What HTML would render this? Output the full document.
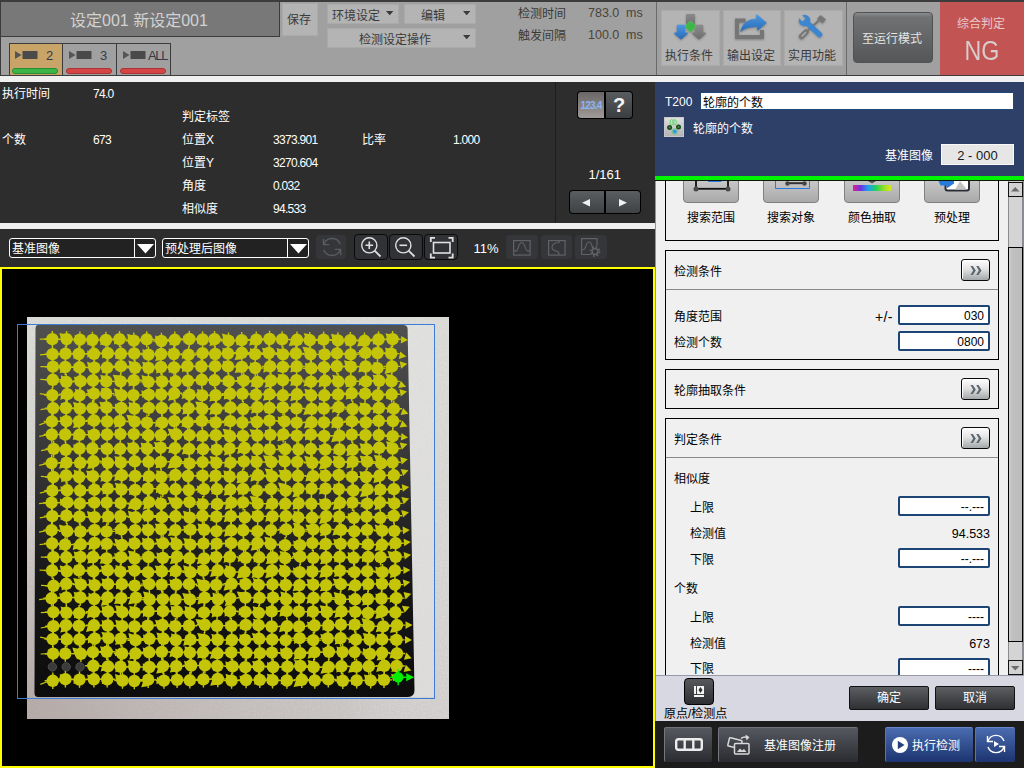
<!DOCTYPE html>
<html lang="zh-CN">
<head>
<meta charset="utf-8">
<title>轮廓的个数</title>
<style>
*{box-sizing:border-box;margin:0;padding:0}
html,body{width:1024px;height:768px;overflow:hidden;background:#2d2d2d}
body{font-family:"Liberation Sans","Noto Sans CJK SC",sans-serif;font-size:12px;color:#fff;position:relative}
.a{position:absolute}
.t{position:absolute;white-space:nowrap;line-height:14px;height:14px;font-size:12px}
.c{text-align:center}
.r{text-align:right}
svg{position:absolute;overflow:visible}
/* top bar */
#top{left:0;top:0;width:1024px;height:76px;background:#a0a0a0;border-top:2px solid #3c3c3c;border-bottom:1px solid #3c3c3c;border-left:1px solid #3c3c3c}
#title{left:1px;top:2px;width:279px;height:35px;background:#787878;border-right:1px solid #3c3c3c;border-bottom:1px solid #3c3c3c}
.lb{background:#b4b4b4;border:1px solid #aaa;color:#3a3a3a}
.dk{color:#3a3a3a}
.tab{top:43px;width:54px;height:32px;border:1px solid #3c3c3c;border-bottom:none;background:#a0a0a0}
.pill{left:2px;top:24px;width:46px;height:5.5px;border-radius:3px;border:1px solid #a83434;background:#d64545}
.num{color:#383848;font-size:13px}
.vsep{top:2px;width:1px;height:73px;background:#6a6a6a}
/* dark panel */
.w{color:#fff}
.n{letter-spacing:-.7px}
.strip{background:#f0f0f0}
.gbtn{background:linear-gradient(#5a5e60,#3c4042);border:1px solid #000}
.dbtn{background:#34363a;border-radius:3px}
.zbtn{background:#303236;border:1px solid #0a0a0a;border-radius:4px;top:234px;height:26px;width:34px}
.sel{top:238px;height:20px;width:147px;border:1px solid #fff;border-radius:3px;background:#222}
/* right panel */
.k{color:#000}
.box{left:665px;width:334px;border:1px solid #000;background:#f0f0f0}
.inp{left:898px;width:92px;height:20px;border:2px solid #1c4474;border-radius:2px;background:#fff;color:#000;text-align:right;padding-right:4px;line-height:18px;font-size:12px}
.more{left:961px;width:29px;height:22px;border:1px solid #0a0a0a;border-radius:3px;background:linear-gradient(#fdfdfd 0,#e4e4e4 45%,#a4a8a8 100%);box-shadow:inset 1px 1px 0 #fff}
.ibtn{top:150px;width:56px;height:53px;border:1px solid #808080;border-radius:4px;background:linear-gradient(#f4f4f4 0,#c8c8c8 58%,#a8a8a8 100%)}
.fbtn{top:686px;height:24px;width:80px;border:1px solid #111;border-radius:2px;background:linear-gradient(#5c5e62,#2e3034);color:#fff;text-align:center;line-height:23px;font-size:12px}
.bbtn{top:727px;height:35px;border-radius:2px;background:linear-gradient(#55585f,#2a2c31);border-top:1px solid #70737a;border-left:1px solid #74777e}
</style>
</head>
<body>
<!-- ===== TOP BAR ===== -->
<div id="top" class="a"></div>
<div id="title" class="a"></div>
<div class="t" style="left:70px;top:11px;font-size:16px;line-height:20px;height:20px;color:#d2d2d2">设定001 新设定001</div>

<!-- camera tabs -->
<div class="a tab" style="left:9px;width:54px;background:#c8a468">
  <svg width="24" height="10" style="left:5px;top:7px"><path d="M0 0L6.5 4L0 8Z" fill="#555"/><rect x="7.5" y="0" width="15" height="8" fill="#4a4a4a"/></svg>
  <div class="t num" style="left:36px;top:5px">2</div>
  <div class="a pill" style="background:#3cb548;border-color:#2a8c34"></div>
</div>
<div class="a tab" style="left:62px;width:55px">
  <svg width="24" height="10" style="left:6px;top:7px"><path d="M0 0L6.5 4L0 8Z" fill="#555"/><rect x="7.5" y="0" width="15" height="8" fill="#4a4a4a"/></svg>
  <div class="t num" style="left:37px;top:5px">3</div>
  <div class="a pill" style="left:3px"></div>
</div>
<div class="a tab" style="left:116px;width:55px">
  <svg width="24" height="10" style="left:6px;top:7px"><path d="M0 0L6.5 4L0 8Z" fill="#555"/><rect x="7.5" y="0" width="15" height="8" fill="#4a4a4a"/></svg>
  <div class="t num" style="left:31px;top:5px;letter-spacing:-1.3px">ALL</div>
  <div class="a pill" style="left:3px"></div>
</div>

<!-- save + dropdown buttons -->
<div class="a lb" style="left:282px;top:3px;width:36px;height:33px"></div>
<div class="t dk" style="left:287px;top:13px">保存</div>
<div class="a lb" style="left:327px;top:4px;width:72px;height:20px"></div>
<div class="t dk" style="left:332px;top:9px">环境设定</div>
<svg width="8" height="5" style="left:386px;top:11px"><path d="M0 0H7.4L3.7 4.2Z" fill="#3a3a3a"/></svg>
<div class="a lb" style="left:404px;top:4px;width:72px;height:20px"></div>
<div class="t dk" style="left:421px;top:9px">编辑</div>
<svg width="8" height="5" style="left:463px;top:11px"><path d="M0 0H7.4L3.7 4.2Z" fill="#3a3a3a"/></svg>
<div class="a lb" style="left:327px;top:28px;width:149px;height:20px"></div>
<div class="t dk" style="left:359px;top:33px">检测设定操作</div>
<svg width="8" height="5" style="left:463px;top:35px"><path d="M0 0H7.4L3.7 4.2Z" fill="#3a3a3a"/></svg>

<!-- timing -->
<div class="t dk" style="left:518px;top:7px">检测时间</div>
<div class="t" style="left:588px;top:6px;color:#4a4438;font-size:12.5px">783.0</div>
<div class="t" style="left:626px;top:6px;color:#4a4438;font-size:12.5px">ms</div>
<div class="t dk" style="left:518px;top:29px">触发间隔</div>
<div class="t" style="left:588px;top:28px;color:#4a4438;font-size:12.5px">100.0</div>
<div class="t" style="left:626px;top:28px;color:#4a4438;font-size:12.5px">ms</div>

<div class="a vsep" style="left:656px"></div>
<!-- icon buttons -->
<div class="a lb" style="left:661px;top:10px;width:59px;height:56px"></div>
<div class="a lb" style="left:723px;top:10px;width:58px;height:56px"></div>
<div class="a lb" style="left:784px;top:10px;width:59px;height:56px"></div>
<div class="t dk" style="left:665px;top:49px">执行条件</div>
<div class="t dk" style="left:727px;top:49px">输出设定</div>
<div class="t dk" style="left:788px;top:49px">实用功能</div>
<!-- icon: exec condition -->
<svg width="34" height="27" style="left:673px;top:13px;filter:drop-shadow(0 1px 1px rgba(0,0,0,.28))" viewBox="0 0 34 27">
  <defs>
    <linearGradient id="gb" x1="0" y1="0" x2="0" y2="1"><stop offset="0" stop-color="#4a96e0"/><stop offset="1" stop-color="#2a6cb8"/></linearGradient>
    <linearGradient id="gg" x1="0" y1="0" x2="0" y2="1"><stop offset="0" stop-color="#8a8a8a"/><stop offset="1" stop-color="#6e6e6e"/></linearGradient>
  </defs>
  <rect x="13" y="1" width="9" height="12" rx="1" fill="url(#gg)"/>
  <path d="M4.500 12.500H11.500V20.200H14.300L8 25.800L1.700 20.200H4.500Z" fill="url(#gb)" stroke="url(#gb)" stroke-width="1.400" stroke-linejoin="round"/>
  <path d="M22.500 12.500H29.500V20.200H32.300L26 25.800L19.700 20.200H22.500Z" fill="url(#gg)" stroke="url(#gg)" stroke-width="1.400" stroke-linejoin="round"/>
  <rect x="13.400" y="9.400" width="8.200" height="8.200" rx="1.600" transform="rotate(45 17.500 13.500)" fill="#3eb648" stroke="#5acc60" stroke-width=".6"/>
</svg>
<!-- icon: output -->
<svg width="34" height="27" style="left:734px;top:13px;filter:drop-shadow(0 1px 1px rgba(0,0,0,.28))" viewBox="0 0 34 27">
  <path d="M1 5.500H11.500V9.500H5V22H26V17H30V26H1Z" fill="#767676"/>
  <path d="M6.800 18.300C8.500 10.500 14 6.200 22.700 6.200V1.800L32.300 9.800L23.700 17.200V13.600C16 13.600 10.500 15 6.800 18.300Z" fill="url(#gb)" stroke="url(#gb)" stroke-width="1" stroke-linejoin="round"/>
</svg>
<!-- icon: tools -->
<svg width="30" height="26" style="left:797px;top:14px;filter:drop-shadow(0 1px 1px rgba(0,0,0,.22))" viewBox="0 0 30 26">
  <defs><mask id="wm" maskUnits="userSpaceOnUse" x="-2" y="-2" width="34" height="30"><rect x="-2" y="-2" width="34" height="30" fill="#fff"/><path d="M7 6L-1 -2" stroke="#000" stroke-width="4.400"/></mask></defs>
  <path d="M24 4.500L7 20" stroke="#777" stroke-width="2.200" stroke-linecap="round"/>
  <path d="M23.500 1.500L28.500 5.500L25.500 9L20.500 5Z" fill="#777" stroke="#777" stroke-width="1" stroke-linejoin="round"/>
  <path d="M9 18L4.500 22.500" stroke="#777" stroke-width="5.500" stroke-linecap="round"/>
  <path d="M8.500 18.500L5 22" stroke="#b0b0b0" stroke-width="1.400" stroke-linecap="round"/>
  <g mask="url(#wm)"><path d="M9 8L22.500 20.500" stroke="#3c86d0" stroke-width="5.600" stroke-linecap="round"/>
  <circle cx="7.500" cy="6.500" r="5.800" fill="#3c86d0"/></g>
</svg>
<div class="a vsep" style="left:846px"></div>
<!-- run mode button -->
<div class="a" style="left:853px;top:12px;width:80px;height:51px;border-radius:4px;border:1px solid #505254;background:linear-gradient(#8a8c8e 0,#707274 4px,#545658 100%)"></div>
<div class="t" style="left:862px;top:32px;color:#e4e4e4">至运行模式</div>
<!-- NG -->
<div class="a" style="left:940px;top:2px;width:84px;height:73px;background:#c25454"></div>
<div class="t" style="left:957px;top:17px;color:#ecc8c8">综合判定</div>
<div class="t c" style="left:940px;width:84px;top:35px;font-size:27px;line-height:32px;height:32px;color:#d8cccc;transform:scaleX(.86)">NG</div>

<!-- light strip below top bar -->
<div class="a strip" style="left:0;top:76px;width:1024px;height:6px"></div>
<!-- ===== DARK INFO PANEL ===== -->
<div class="a" style="left:0;top:82px;width:655px;height:141px;background:#2d2d2d"></div>
<div class="t w" style="left:2px;top:87px">执行时间</div>
<div class="t w n" style="left:93px;top:87px">74.0</div>
<div class="t w" style="left:182px;top:110px">判定标签</div>
<div class="t w" style="left:2px;top:133px">个数</div>
<div class="t w n" style="left:93px;top:133px">673</div>
<div class="t w" style="left:182px;top:133px">位置X</div>
<div class="t w n" style="left:273px;top:133px">3373.901</div>
<div class="t w" style="left:362px;top:133px">比率</div>
<div class="t w n" style="left:453px;top:133px">1.000</div>
<div class="t w" style="left:182px;top:156px">位置Y</div>
<div class="t w n" style="left:273px;top:156px">3270.604</div>
<div class="t w" style="left:182px;top:179px">角度</div>
<div class="t w n" style="left:273px;top:179px">0.032</div>
<div class="t w" style="left:182px;top:202px">相似度</div>
<div class="t w n" style="left:273px;top:202px">94.533</div>
<div class="a" style="left:555px;top:82px;width:1px;height:141px;background:#0000ff"></div>
<!-- 123.4 / ? -->
<div class="a" style="left:577px;top:91px;width:56px;height:28px;background:#000;border-radius:4px"></div>
<div class="a" style="left:578px;top:92px;width:26px;height:26px;border-radius:3px 0 0 3px;background:linear-gradient(#6a6666,#a09a98)"></div>
<div class="a" style="left:606px;top:92px;width:26px;height:26px;border-radius:0 3px 3px 0;background:linear-gradient(#585c5e,#3a3e40)"></div>
<div class="t" style="left:578px;top:99px;width:26px;font-size:10px;font-weight:bold;letter-spacing:-.8px;color:#8ab4f4;text-align:center">123.4</div>
<div class="t c" style="left:606px;top:93.5px;width:26px;font-size:20px;font-weight:bold;line-height:22px;height:22px;color:#f4f4f4">?</div>
<!-- 1/161 -->
<div class="t w" style="left:588.5px;top:168px;font-size:13px">1/161</div>
<div class="a" style="left:569px;top:190px;width:72px;height:24px;background:#000;border-radius:4px"></div>
<div class="a" style="left:570px;top:191px;width:34px;height:22px;border-radius:3px 0 0 3px;background:linear-gradient(#5a5e60,#3e4244)"></div>
<div class="a" style="left:606px;top:191px;width:34px;height:22px;border-radius:0 3px 3px 0;background:linear-gradient(#5a5e60,#3e4244)"></div>
<svg width="8" height="8" style="left:582px;top:199px"><path d="M8 0V7.500L0 3.750Z" fill="#f0f0f0"/></svg>
<svg width="8" height="8" style="left:619px;top:199px"><path d="M0 0V7.500L8 3.750Z" fill="#f0f0f0"/></svg>
<!-- strip -->
<div class="a strip" style="left:0;top:223px;width:655px;height:6px"></div>
<!-- ===== TOOLBAR ===== -->
<div class="a" style="left:0;top:229px;width:655px;height:38px;background:#2d2d2d"></div>
<div class="a sel" style="left:9px"><div class="a" style="left:124px;top:0;width:1px;height:18px;background:#fff"></div>
  <svg width="18" height="10" style="left:127px;top:5px"><path d="M0 0H17L8.500 9.500Z" fill="#fff"/></svg></div>
<div class="t w" style="left:12px;top:242px">基准图像</div>
<div class="a sel" style="left:162px"><div class="a" style="left:124px;top:0;width:1px;height:18px;background:#fff"></div>
  <svg width="18" height="10" style="left:127px;top:5px"><path d="M0 0H17L8.500 9.500Z" fill="#fff"/></svg></div>
<div class="t w" style="left:165px;top:242px">预处理后图像</div>
<!-- refresh (disabled) -->
<div class="a dbtn" style="left:316px;top:235px;width:30px;height:24px"></div>
<svg width="22" height="22" style="left:321px;top:236px" viewBox="0 0 20 20" fill="none" stroke="#5a5c60" stroke-width="1.200">
  <path d="M2.500 7.500A8 8 0 0 1 17.500 7.500"/><path d="M2.200 2.500V7.800H7.500"/>
  <path d="M17.500 12.500A8 8 0 0 1 2.500 12.500"/><path d="M17.800 17.500V12.200H12.500"/>
</svg>
<!-- zoom buttons -->
<div class="a zbtn" style="left:354px"></div>
<div class="a zbtn" style="left:389px"></div>
<div class="a zbtn" style="left:424px"></div>
<svg width="24" height="24" style="left:358px;top:234px" viewBox="0 0 24 24" fill="none" stroke="#e0e0e0" stroke-width="1.400">
  <circle cx="11.300" cy="11.300" r="7.600"/><path d="M16.800 16.800L22.500 22.500" stroke-width="1.800"/><path d="M7.500 11.300H15.100M11.300 7.500V15.100" stroke-width="1.600"/>
</svg>
<svg width="24" height="24" style="left:392px;top:234px" viewBox="0 0 24 24" fill="none" stroke="#e0e0e0" stroke-width="1.400">
  <circle cx="11.300" cy="11.300" r="7.600"/><path d="M16.800 16.800L22.500 22.500" stroke-width="1.800"/><path d="M7.500 11.300H15.100" stroke-width="1.600"/>
</svg>
<svg width="24" height="22" style="left:430px;top:237px" viewBox="0 0 24 22" fill="none" stroke="#e0e0e0" stroke-width="1.600">
  <rect x="3.500" y="5.500" width="16.500" height="10.500"/>
  <path d="M0.800 5V0.800H5M18.500 0.800H22.700V5M22.700 16.500V20.700H18.500M5 20.700H0.800V16.500" stroke-width="1.800"/>
</svg>
<div class="t w" style="left:473.500px;top:242px;font-size:13px">11%</div>
<!-- disabled buttons -->
<div class="a dbtn" style="left:506px;top:235px;width:32px;height:24px"></div>
<div class="a dbtn" style="left:541px;top:235px;width:31px;height:24px"></div>
<div class="a dbtn" style="left:575px;top:235px;width:32px;height:24px"></div>
<svg width="18" height="16" style="left:513px;top:240px" viewBox="0 0 18 16" fill="none" stroke="#606266" stroke-width="1.200">
  <rect x=".6" y=".6" width="16.500" height="14.500"/><path d="M.6 10.800H3.500C5 10.800 5.500 2.500 8.800 2.500C12 2.500 12.500 10.800 14.200 10.800H17"/>
</svg>
<svg width="18" height="16" style="left:548px;top:240px" viewBox="0 0 18 16" fill="none" stroke="#606266" stroke-width="1.200">
  <rect x=".6" y=".6" width="16.500" height="14.500"/><path d="M11 .6V2.500C5.500 2.500 4 5 4 7.500C4 10.500 7 11 9.500 11.500C11 12 11 13 11 15"/>
</svg>
<svg width="24" height="20" style="left:581px;top:238px" viewBox="0 0 24 20" fill="none" stroke="#606266" stroke-width="1.200">
  <path d="M9 16.500H.6V.6H16V8"/><path d="M.6 11.500H3C4.500 11.500 5 4 8 4C10.500 4 11 8 11.500 9.500"/>
  <circle cx="14" cy="13.500" r="2.900" stroke-width="1.500"/>
  <circle cx="14" cy="13.500" r="4.500" stroke-width="1.800" stroke-dasharray="1.700 1.830"/>
</svg>
<!-- ===== IMAGE VIEW ===== -->
<div class="a" style="left:0;top:267px;width:655px;height:501px;background:#000;border:2px solid #ffff00"></div>
<svg width="655" height="501" style="left:0;top:267px" viewBox="0 267 655 501">
<defs><linearGradient id="pg" x1="0" y1="0" x2="0" y2="1"><stop offset="0" stop-color="#d8d8d4"/><stop offset=".7" stop-color="#d4d2d0"/><stop offset="1" stop-color="#cfcccb"/></linearGradient><linearGradient id="tg" x1="0" y1="0" x2="0" y2="1"><stop offset="0" stop-color="#505050"/><stop offset=".35" stop-color="#383838"/><stop offset=".7" stop-color="#161616"/><stop offset="1" stop-color="#0c0c0c"/></linearGradient><filter id="nz" x="0" y="0" width="100%" height="100%"><feTurbulence type="fractalNoise" baseFrequency=".55" numOctaves="2" seed="3" result="n"/><feColorMatrix in="n" type="matrix" values="0 0 0 0 1  0 0 0 0 1  0 0 0 0 1  .9 .9 0 0 -.75"/><feComposite operator="in" in2="SourceGraphic"/></filter></defs>
<rect x="27" y="317" width="422" height="402" fill="url(#pg)"/>
<rect x="27" y="317" width="422" height="402" fill="#fff" opacity=".35" filter="url(#nz)"/>
<defs><linearGradient id="bl" x1="0" y1="0" x2="1" y2="0"><stop offset="0" stop-color="#9c8c88" stop-opacity=".55"/><stop offset=".75" stop-color="#b0a8a4" stop-opacity=".25"/><stop offset="1" stop-color="#d8d8d8" stop-opacity="0"/></linearGradient><linearGradient id="bv" x1="0" y1="0" x2="0" y2="1"><stop offset="0" stop-color="#9c8c88" stop-opacity="0"/><stop offset=".5" stop-color="#9c8c88" stop-opacity=".12"/><stop offset="1" stop-color="#9c8c88" stop-opacity=".55"/></linearGradient></defs><rect x="27" y="697" width="422" height="22" fill="url(#bl)"/><rect x="27" y="317" width="9" height="380" fill="url(#bv)"/>
<rect x="408" y="325" width="27" height="372" fill="#e4e4e4" opacity=".55"/>
<path d="M38 325H403Q407.500 325 407.600 329L414.500 690Q414.500 697 408 697H38Q34.500 697 34.500 693L35.500 329Q35.500 325 38 325Z" fill="url(#tg)"/>
<circle cx="52.4" cy="666.9" r="4.200" fill="#3a3a3a" stroke="#555" stroke-width=".8"/>
<circle cx="66.2" cy="666.9" r="4.200" fill="#3a3a3a" stroke="#555" stroke-width=".8"/>
<circle cx="80.0" cy="666.9" r="4.200" fill="#3a3a3a" stroke="#555" stroke-width=".8"/>
<path d="M67.1 334.5L61.6 340.3L59.3 333.0ZM51.6 331.0h1.400v16.400h-1.400zM44.1 338.5h16.400v1.400h-16.400zM82.1 338.1L75.3 342.3L74.8 334.7ZM65.9 330.9h1.400v16.400h-1.400zM58.4 338.4h16.400v1.400h-16.400zM95.0 343.0L87.4 345.2L89.0 337.8ZM79.2 331.5h1.400v16.400h-1.400zM71.7 339.0h16.400v1.400h-16.400zM107.7 342.5L100.2 345.2L101.4 337.7ZM91.7 331.8h1.400v16.400h-1.400zM84.2 339.3h16.400v1.400h-16.400zM121.3 341.4L114.0 344.5L114.7 336.9ZM105.2 331.7h1.400v16.400h-1.400zM97.7 339.2h16.400v1.400h-16.400zM134.7 336.1L128.6 341.2L127.1 333.7ZM118.8 330.9h1.400v16.400h-1.400zM111.3 338.4h16.400v1.400h-16.400zM149.3 339.8L142.6 344.0L142.1 336.4ZM133.1 332.5h1.400v16.400h-1.400zM125.6 340.0h16.400v1.400h-16.400zM162.2 338.9L155.4 342.9L155.1 335.3ZM146.0 331.2h1.400v16.400h-1.400zM138.5 338.7h16.400v1.400h-16.400zM176.8 342.4L169.5 345.6L170.2 338.0ZM160.7 332.8h1.400v16.400h-1.400zM153.2 340.3h16.400v1.400h-16.400zM190.3 338.7L183.6 343.0L183.1 335.4ZM174.1 331.6h1.400v16.400h-1.400zM166.6 339.1h16.400v1.400h-16.400zM204.6 341.1L197.2 343.9L198.2 336.4ZM188.6 330.8h1.400v16.400h-1.400zM181.1 338.3h16.400v1.400h-16.400zM217.2 344.6L209.4 345.9L211.8 338.7ZM201.9 331.3h1.400v16.400h-1.400zM194.4 338.8h16.400v1.400h-16.400zM229.6 335.4L223.7 340.8L221.9 333.4ZM213.8 331.0h1.400v16.400h-1.400zM206.3 338.5h16.400v1.400h-16.400zM243.8 342.5L236.4 345.5L237.3 337.9ZM227.8 332.5h1.400v16.400h-1.400zM220.3 340.0h16.400v1.400h-16.400zM256.9 343.5L249.2 345.7L250.8 338.3ZM241.0 332.0h1.400v16.400h-1.400zM233.5 339.5h16.400v1.400h-16.400zM271.7 338.4L265.1 342.8L264.4 335.2ZM255.6 331.5h1.400v16.400h-1.400zM248.1 339.0h16.400v1.400h-16.400zM285.1 338.9L278.2 342.8L278.1 335.2ZM268.9 330.8h1.400v16.400h-1.400zM261.4 338.3h16.400v1.400h-16.400zM296.6 344.9L288.7 345.9L291.4 338.8ZM281.4 331.2h1.400v16.400h-1.400zM273.9 338.7h16.400v1.400h-16.400zM311.6 334.5L306.3 340.5L303.7 333.3ZM296.3 331.6h1.400v16.400h-1.400zM288.8 339.1h16.400v1.400h-16.400zM325.3 340.7L318.1 344.3L318.4 336.7ZM309.1 332.0h1.400v16.400h-1.400zM301.6 339.5h16.400v1.400h-16.400zM338.6 335.6L332.8 341.0L330.9 333.7ZM322.9 331.4h1.400v16.400h-1.400zM315.4 338.9h16.400v1.400h-16.400zM353.1 343.8L345.4 346.0L347.1 338.6ZM337.2 332.2h1.400v16.400h-1.400zM329.7 339.7h16.400v1.400h-16.400zM364.9 345.3L357.0 346.6L359.6 339.4ZM349.6 332.0h1.400v16.400h-1.400zM342.1 339.5h16.400v1.400h-16.400zM379.9 341.1L372.9 344.8L373.0 337.2ZM363.8 332.6h1.400v16.400h-1.400zM356.3 340.1h16.400v1.400h-16.400zM393.2 334.9L387.7 340.6L385.4 333.3ZM377.8 331.3h1.400v16.400h-1.400zM370.3 338.8h16.400v1.400h-16.400zM408.0 340.0L400.8 343.4L401.3 335.9ZM391.9 331.0h1.400v16.400h-1.400zM384.4 338.5h16.400v1.400h-16.400zM68.0 354.7L60.9 358.2L61.1 350.6ZM51.8 346.0h1.400v16.400h-1.400zM44.3 353.5h16.400v1.400h-16.400zM80.8 356.2L73.2 358.7L74.5 351.2ZM64.8 345.4h1.400v16.400h-1.400zM57.3 352.9h16.400v1.400h-16.400zM94.3 354.1L87.3 357.8L87.3 350.2ZM78.1 345.8h1.400v16.400h-1.400zM70.6 353.3h16.400v1.400h-16.400zM109.4 355.4L102.0 358.4L102.8 350.9ZM93.3 345.6h1.400v16.400h-1.400zM85.8 353.1h16.400v1.400h-16.400zM122.8 357.1L115.0 359.0L116.9 351.6ZM107.1 345.0h1.400v16.400h-1.400zM99.6 352.5h16.400v1.400h-16.400zM136.4 354.1L129.4 357.7L129.5 350.1ZM120.2 345.6h1.400v16.400h-1.400zM112.7 353.1h16.400v1.400h-16.400zM149.7 352.4L143.0 356.7L142.5 349.1ZM133.5 345.3h1.400v16.400h-1.400zM126.0 352.8h16.400v1.400h-16.400zM163.0 359.8L155.1 361.0L157.7 353.9ZM147.7 346.4h1.400v16.400h-1.400zM140.2 353.9h16.400v1.400h-16.400zM176.2 350.5L170.3 355.8L168.6 348.4ZM160.4 345.8h1.400v16.400h-1.400zM152.9 353.3h16.400v1.400h-16.400zM189.1 356.2L181.7 359.0L182.7 351.5ZM173.1 345.8h1.400v16.400h-1.400zM165.6 353.3h16.400v1.400h-16.400zM204.1 353.4L197.4 357.8L196.8 350.2ZM187.9 346.5h1.400v16.400h-1.400zM180.4 354.0h16.400v1.400h-16.400zM217.8 356.2L210.1 358.6L211.7 351.1ZM201.9 344.9h1.400v16.400h-1.400zM194.4 352.4h16.400v1.400h-16.400zM230.0 349.5L224.4 355.2L222.2 347.9ZM214.5 345.8h1.400v16.400h-1.400zM207.0 353.3h16.400v1.400h-16.400zM242.4 359.2L234.5 360.1L237.2 353.1ZM227.2 345.3h1.400v16.400h-1.400zM219.7 352.8h16.400v1.400h-16.400zM257.2 351.0L250.7 355.6L249.9 348.0ZM241.1 344.6h1.400v16.400h-1.400zM233.6 352.1h16.400v1.400h-16.400zM269.8 349.0L264.4 354.9L261.9 347.8ZM254.4 346.0h1.400v16.400h-1.400zM246.9 353.5h16.400v1.400h-16.400zM284.1 350.4L277.9 355.3L276.6 347.8ZM268.2 344.8h1.400v16.400h-1.400zM260.7 352.3h16.400v1.400h-16.400zM298.5 353.2L291.8 357.6L291.2 350.0ZM282.3 346.2h1.400v16.400h-1.400zM274.8 353.7h16.400v1.400h-16.400zM310.3 347.8L305.2 353.9L302.4 346.8ZM295.2 345.3h1.400v16.400h-1.400zM287.7 352.8h16.400v1.400h-16.400zM325.9 353.5L319.2 357.7L318.7 350.1ZM309.8 346.2h1.400v16.400h-1.400zM302.3 353.7h16.400v1.400h-16.400zM340.1 353.5L333.3 357.7L332.9 350.1ZM323.9 346.2h1.400v16.400h-1.400zM316.4 353.7h16.400v1.400h-16.400zM352.3 355.8L344.8 358.5L346.0 350.9ZM336.3 345.2h1.400v16.400h-1.400zM328.8 352.7h16.400v1.400h-16.400zM366.1 352.7L359.6 357.3L358.8 349.7ZM350.0 346.2h1.400v16.400h-1.400zM342.5 353.7h16.400v1.400h-16.400zM380.9 350.1L374.7 355.0L373.3 347.6ZM364.9 344.6h1.400v16.400h-1.400zM357.4 352.1h16.400v1.400h-16.400zM392.6 349.8L386.6 354.9L385.0 347.5ZM376.8 344.8h1.400v16.400h-1.400zM369.3 352.3h16.400v1.400h-16.400zM406.4 356.4L398.8 358.9L400.2 351.4ZM390.5 345.4h1.400v16.400h-1.400zM383.0 352.9h16.400v1.400h-16.400zM67.5 371.8L59.6 373.1L62.2 365.9ZM52.2 358.5h1.400v16.400h-1.400zM44.7 366.0h16.400v1.400h-16.400zM80.7 367.3L73.6 371.0L73.7 363.4ZM64.5 358.8h1.400v16.400h-1.400zM57.0 366.3h16.400v1.400h-16.400zM94.7 364.0L88.6 369.2L87.0 361.8ZM78.8 359.1h1.400v16.400h-1.400zM71.3 366.6h16.400v1.400h-16.400zM109.5 371.2L101.8 373.3L103.5 365.9ZM93.7 359.4h1.400v16.400h-1.400zM86.2 366.9h16.400v1.400h-16.400zM122.4 366.2L115.8 370.5L115.2 363.0ZM106.3 359.3h1.400v16.400h-1.400zM98.8 366.8h16.400v1.400h-16.400zM136.0 362.8L130.1 368.1L128.4 360.6ZM120.2 358.0h1.400v16.400h-1.400zM112.7 365.5h16.400v1.400h-16.400zM149.9 363.5L144.2 369.1L142.1 361.8ZM134.3 359.6h1.400v16.400h-1.400zM126.8 367.1h16.400v1.400h-16.400zM163.7 371.1L156.0 373.4L157.6 365.9ZM147.8 359.7h1.400v16.400h-1.400zM140.3 367.2h16.400v1.400h-16.400zM176.1 370.6L168.4 372.7L170.2 365.3ZM160.3 358.8h1.400v16.400h-1.400zM152.8 366.3h16.400v1.400h-16.400zM189.4 369.1L182.0 372.2L182.8 364.6ZM173.3 359.3h1.400v16.400h-1.400zM165.8 366.8h16.400v1.400h-16.400zM202.9 365.9L196.0 369.8L195.8 362.2ZM186.7 358.0h1.400v16.400h-1.400zM179.2 365.5h16.400v1.400h-16.400zM216.8 367.2L209.6 370.7L210.0 363.1ZM200.6 358.3h1.400v16.400h-1.400zM193.1 365.8h16.400v1.400h-16.400zM230.3 363.0L224.3 368.2L222.7 360.7ZM214.5 358.0h1.400v16.400h-1.400zM207.0 365.5h16.400v1.400h-16.400zM242.5 371.8L234.7 373.0L237.3 365.8ZM227.3 358.2h1.400v16.400h-1.400zM219.8 365.7h16.400v1.400h-16.400zM257.2 365.2L250.7 369.7L249.8 362.2ZM241.1 358.7h1.400v16.400h-1.400zM233.6 366.2h16.400v1.400h-16.400zM270.6 369.7L263.3 372.7L264.1 365.1ZM254.5 359.8h1.400v16.400h-1.400zM247.0 367.3h16.400v1.400h-16.400zM285.1 370.2L277.4 372.2L279.2 364.8ZM269.4 358.2h1.400v16.400h-1.400zM261.9 365.7h16.400v1.400h-16.400zM297.9 370.6L290.2 372.6L292.0 365.2ZM282.2 358.7h1.400v16.400h-1.400zM274.7 366.2h16.400v1.400h-16.400zM312.2 366.0L305.3 370.0L305.1 362.4ZM296.0 358.2h1.400v16.400h-1.400zM288.5 365.7h16.400v1.400h-16.400zM326.6 365.8L320.3 370.7L319.1 363.2ZM310.6 360.1h1.400v16.400h-1.400zM303.1 367.6h16.400v1.400h-16.400zM339.5 367.7L332.4 371.3L332.7 363.7ZM323.3 359.0h1.400v16.400h-1.400zM315.8 366.5h16.400v1.400h-16.400zM351.6 361.9L346.0 367.6L343.9 360.3ZM336.1 358.1h1.400v16.400h-1.400zM328.6 365.6h16.400v1.400h-16.400zM365.9 370.6L358.2 372.5L360.1 365.2ZM350.2 358.5h1.400v16.400h-1.400zM342.7 366.0h16.400v1.400h-16.400zM381.0 364.7L374.4 369.3L373.6 361.7ZM364.9 358.3h1.400v16.400h-1.400zM357.4 365.8h16.400v1.400h-16.400zM392.3 372.3L384.5 374.1L386.6 366.8ZM376.7 360.0h1.400v16.400h-1.400zM369.2 367.5h16.400v1.400h-16.400zM407.3 363.7L401.1 368.7L399.7 361.2ZM391.3 358.2h1.400v16.400h-1.400zM383.8 365.7h16.400v1.400h-16.400zM68.2 378.3L61.6 382.7L60.9 375.2ZM52.1 371.6h1.400v16.400h-1.400zM44.6 379.1h16.400v1.400h-16.400zM81.5 378.9L75.4 384.0L73.9 376.5ZM65.6 373.7h1.400v16.400h-1.400zM58.1 381.2h16.400v1.400h-16.400zM96.1 380.4L89.3 384.5L88.9 377.0ZM79.9 373.0h1.400v16.400h-1.400zM72.4 380.5h16.400v1.400h-16.400zM107.9 376.8L102.0 382.2L100.2 374.8ZM92.2 372.3h1.400v16.400h-1.400zM84.7 379.8h16.400v1.400h-16.400zM120.6 375.6L115.6 381.8L112.7 374.7ZM105.6 373.2h1.400v16.400h-1.400zM98.1 380.7h16.400v1.400h-16.400zM135.9 384.0L128.4 386.6L129.7 379.1ZM119.9 373.2h1.400v16.400h-1.400zM112.4 380.7h16.400v1.400h-16.400zM149.1 377.6L142.8 382.5L141.5 375.0ZM133.1 372.0h1.400v16.400h-1.400zM125.6 379.5h16.400v1.400h-16.400zM163.6 378.9L157.5 383.9L156.0 376.5ZM147.7 373.7h1.400v16.400h-1.400zM140.2 381.2h16.400v1.400h-16.400zM177.4 379.1L171.1 383.9L169.9 376.4ZM161.4 373.3h1.400v16.400h-1.400zM153.9 380.8h16.400v1.400h-16.400zM191.1 381.1L184.2 385.0L184.0 377.4ZM174.9 373.1h1.400v16.400h-1.400zM167.4 380.6h16.400v1.400h-16.400zM203.4 380.0L196.6 384.2L196.2 376.6ZM187.2 372.6h1.400v16.400h-1.400zM179.7 380.1h16.400v1.400h-16.400zM217.2 381.4L209.8 384.4L210.6 376.9ZM201.1 371.6h1.400v16.400h-1.400zM193.6 379.1h16.400v1.400h-16.400zM230.0 382.2L222.6 385.1L223.5 377.6ZM213.9 372.1h1.400v16.400h-1.400zM206.4 379.6h16.400v1.400h-16.400zM244.1 379.6L237.6 384.1L236.8 376.5ZM228.0 373.0h1.400v16.400h-1.400zM220.5 380.5h16.400v1.400h-16.400zM258.5 385.7L250.6 387.0L253.1 379.8ZM243.1 372.5h1.400v16.400h-1.400zM235.6 380.0h16.400v1.400h-16.400zM272.3 386.0L264.5 387.8L266.6 380.5ZM256.7 373.7h1.400v16.400h-1.400zM249.2 381.2h16.400v1.400h-16.400zM285.6 375.3L280.3 381.2L277.7 374.1ZM270.3 372.3h1.400v16.400h-1.400zM262.8 379.8h16.400v1.400h-16.400zM298.0 384.1L290.2 386.0L292.1 378.6ZM282.2 372.0h1.400v16.400h-1.400zM274.7 379.5h16.400v1.400h-16.400zM311.2 384.9L303.4 386.4L305.7 379.1ZM295.8 371.9h1.400v16.400h-1.400zM288.3 379.4h16.400v1.400h-16.400zM326.1 385.0L318.5 387.2L320.1 379.8ZM310.3 373.5h1.400v16.400h-1.400zM302.8 381.0h16.400v1.400h-16.400zM340.0 376.5L334.3 382.1L332.2 374.8ZM324.4 372.6h1.400v16.400h-1.400zM316.9 380.1h16.400v1.400h-16.400zM353.2 385.4L345.5 387.3L347.4 379.9ZM337.5 373.3h1.400v16.400h-1.400zM330.0 380.8h16.400v1.400h-16.400zM366.0 382.7L358.6 385.8L359.4 378.2ZM349.9 373.0h1.400v16.400h-1.400zM342.4 380.5h16.400v1.400h-16.400zM380.4 375.8L375.3 381.9L372.5 374.8ZM365.3 373.2h1.400v16.400h-1.400zM357.8 380.7h16.400v1.400h-16.400zM393.6 375.1L388.5 381.2L385.7 374.1ZM378.5 372.6h1.400v16.400h-1.400zM371.0 380.1h16.400v1.400h-16.400zM406.1 386.7L398.2 387.9L400.8 380.8ZM390.8 373.2h1.400v16.400h-1.400zM383.3 380.7h16.400v1.400h-16.400zM67.7 396.9L60.3 399.9L61.2 392.3ZM51.6 386.9h1.400v16.400h-1.400zM44.1 394.4h16.400v1.400h-16.400zM82.5 391.2L76.4 396.3L74.9 388.8ZM66.6 386.0h1.400v16.400h-1.400zM59.1 393.5h16.400v1.400h-16.400zM94.4 390.7L88.9 396.4L86.6 389.2ZM78.9 387.2h1.400v16.400h-1.400zM71.4 394.7h16.400v1.400h-16.400zM108.8 389.5L103.1 395.0L101.1 387.7ZM93.2 385.5h1.400v16.400h-1.400zM85.7 393.0h16.400v1.400h-16.400zM121.4 390.5L115.3 395.6L113.8 388.2ZM105.5 385.4h1.400v16.400h-1.400zM98.0 392.9h16.400v1.400h-16.400zM136.7 398.3L129.0 400.6L130.6 393.1ZM120.8 386.9h1.400v16.400h-1.400zM113.3 394.4h16.400v1.400h-16.400zM148.8 393.3L142.3 397.9L141.4 390.3ZM132.7 386.9h1.400v16.400h-1.400zM125.2 394.4h16.400v1.400h-16.400zM163.8 390.7L158.1 396.2L156.1 388.8ZM148.2 386.5h1.400v16.400h-1.400zM140.7 394.0h16.400v1.400h-16.400zM175.8 399.2L168.0 400.7L170.3 393.5ZM160.4 386.3h1.400v16.400h-1.400zM152.9 393.8h16.400v1.400h-16.400zM189.3 396.8L181.6 398.9L183.3 391.5ZM173.5 385.1h1.400v16.400h-1.400zM166.0 392.6h16.400v1.400h-16.400zM204.6 390.8L198.8 396.3L196.9 388.9ZM188.9 386.5h1.400v16.400h-1.400zM181.4 394.0h16.400v1.400h-16.400zM217.0 399.9L209.2 401.5L211.5 394.2ZM201.5 387.2h1.400v16.400h-1.400zM194.0 394.7h16.400v1.400h-16.400zM231.1 396.5L223.8 399.7L224.4 392.1ZM214.9 387.0h1.400v16.400h-1.400zM207.4 394.5h16.400v1.400h-16.400zM245.2 397.1L237.6 399.3L239.2 391.9ZM229.4 385.6h1.400v16.400h-1.400zM221.9 393.1h16.400v1.400h-16.400zM257.8 395.9L250.3 398.8L251.3 391.3ZM241.7 385.7h1.400v16.400h-1.400zM234.2 393.2h16.400v1.400h-16.400zM270.8 399.2L262.9 400.7L265.2 393.5ZM255.3 386.4h1.400v16.400h-1.400zM247.8 393.9h16.400v1.400h-16.400zM284.7 397.6L277.1 399.8L278.7 392.4ZM268.9 386.0h1.400v16.400h-1.400zM261.4 393.5h16.400v1.400h-16.400zM297.9 399.3L290.1 401.2L292.1 393.8ZM282.2 387.1h1.400v16.400h-1.400zM274.7 394.6h16.400v1.400h-16.400zM312.1 390.7L306.1 396.0L304.4 388.7ZM296.3 386.1h1.400v16.400h-1.400zM288.8 393.6h16.400v1.400h-16.400zM326.4 397.6L318.9 400.3L320.1 392.8ZM310.4 387.1h1.400v16.400h-1.400zM302.9 394.6h16.400v1.400h-16.400zM339.8 395.7L332.7 399.3L332.9 391.7ZM323.6 387.1h1.400v16.400h-1.400zM316.1 394.6h16.400v1.400h-16.400zM353.3 397.3L345.7 399.8L347.1 392.3ZM337.4 386.3h1.400v16.400h-1.400zM329.9 393.8h16.400v1.400h-16.400zM367.2 392.6L360.4 396.7L360.0 389.1ZM351.0 385.1h1.400v16.400h-1.400zM343.5 392.6h16.400v1.400h-16.400zM380.0 398.2L372.2 399.8L374.4 392.5ZM364.4 385.5h1.400v16.400h-1.400zM356.9 393.0h16.400v1.400h-16.400zM393.3 395.7L386.1 399.2L386.4 391.6ZM377.1 386.9h1.400v16.400h-1.400zM369.6 394.4h16.400v1.400h-16.400zM407.0 391.6L400.8 396.6L399.4 389.1ZM391.0 386.1h1.400v16.400h-1.400zM383.5 393.6h16.400v1.400h-16.400zM68.3 405.0L62.2 410.1L60.7 402.7ZM52.4 399.9h1.400v16.400h-1.400zM44.9 407.4h16.400v1.400h-16.400zM80.8 403.8L75.1 409.4L73.0 402.1ZM65.2 399.8h1.400v16.400h-1.400zM57.7 407.3h16.400v1.400h-16.400zM95.5 408.5L88.5 412.4L88.4 404.8ZM79.3 400.4h1.400v16.400h-1.400zM71.8 407.9h16.400v1.400h-16.400zM107.2 403.0L101.9 408.9L99.3 401.7ZM91.9 399.9h1.400v16.400h-1.400zM84.4 407.4h16.400v1.400h-16.400zM122.0 407.1L115.1 411.1L114.9 403.5ZM105.8 399.3h1.400v16.400h-1.400zM98.3 406.8h16.400v1.400h-16.400zM136.2 403.8L130.5 409.4L128.4 402.1ZM120.6 399.8h1.400v16.400h-1.400zM113.1 407.3h16.400v1.400h-16.400zM149.9 408.5L142.9 412.3L142.9 404.7ZM133.7 400.4h1.400v16.400h-1.400zM126.2 407.9h16.400v1.400h-16.400zM164.3 407.9L157.3 411.7L157.3 404.1ZM148.1 399.7h1.400v16.400h-1.400zM140.6 407.2h16.400v1.400h-16.400zM177.2 408.5L170.1 412.1L170.3 404.5ZM161.0 399.8h1.400v16.400h-1.400zM153.5 407.3h16.400v1.400h-16.400zM190.0 412.7L182.2 414.4L184.3 407.1ZM174.4 400.2h1.400v16.400h-1.400zM166.9 407.7h16.400v1.400h-16.400zM203.0 402.3L197.9 408.5L195.1 401.4ZM187.9 399.9h1.400v16.400h-1.400zM180.4 407.4h16.400v1.400h-16.400zM217.2 413.0L209.4 414.8L211.4 407.5ZM201.5 400.8h1.400v16.400h-1.400zM194.0 408.3h16.400v1.400h-16.400zM231.8 408.4L224.9 412.4L224.7 404.8ZM215.6 400.6h1.400v16.400h-1.400zM208.1 408.1h16.400v1.400h-16.400zM245.9 408.2L238.8 411.7L239.1 404.1ZM229.7 399.3h1.400v16.400h-1.400zM222.2 406.8h16.400v1.400h-16.400zM258.6 410.9L251.2 413.8L252.1 406.3ZM242.5 400.8h1.400v16.400h-1.400zM235.0 408.3h16.400v1.400h-16.400zM272.4 411.2L264.7 413.1L266.6 405.7ZM256.7 399.0h1.400v16.400h-1.400zM249.2 406.5h16.400v1.400h-16.400zM284.9 406.4L278.3 410.8L277.5 403.3ZM268.7 399.7h1.400v16.400h-1.400zM261.2 407.2h16.400v1.400h-16.400zM298.4 406.5L291.7 410.7L291.2 403.1ZM282.2 399.2h1.400v16.400h-1.400zM274.7 406.7h16.400v1.400h-16.400zM311.1 413.7L303.2 414.9L305.8 407.8ZM295.8 400.2h1.400v16.400h-1.400zM288.3 407.7h16.400v1.400h-16.400zM326.4 403.9L321.0 409.8L318.5 402.6ZM311.0 400.7h1.400v16.400h-1.400zM303.5 408.2h16.400v1.400h-16.400zM339.3 410.1L332.0 413.1L332.8 405.6ZM323.2 400.3h1.400v16.400h-1.400zM315.7 407.8h16.400v1.400h-16.400zM354.1 408.8L346.7 411.9L347.5 404.3ZM337.9 399.0h1.400v16.400h-1.400zM330.4 406.5h16.400v1.400h-16.400zM367.2 403.5L362.0 409.6L359.3 402.5ZM352.0 400.8h1.400v16.400h-1.400zM344.5 408.3h16.400v1.400h-16.400zM380.3 410.3L373.0 413.5L373.7 405.9ZM364.2 400.8h1.400v16.400h-1.400zM356.7 408.3h16.400v1.400h-16.400zM394.2 410.1L386.8 412.9L387.8 405.4ZM378.2 399.8h1.400v16.400h-1.400zM370.7 407.3h16.400v1.400h-16.400zM408.4 413.8L400.6 415.1L403.1 407.9ZM393.1 400.5h1.400v16.400h-1.400zM385.6 408.0h16.400v1.400h-16.400zM67.3 419.4L60.8 424.1L59.8 416.6ZM51.2 413.2h1.400v16.400h-1.400zM43.7 420.7h16.400v1.400h-16.400zM80.7 426.9L72.8 427.9L75.6 420.8ZM65.6 413.0h1.400v16.400h-1.400zM58.1 420.5h16.400v1.400h-16.400zM94.7 421.3L87.7 425.1L87.7 417.5ZM78.5 413.0h1.400v16.400h-1.400zM71.0 420.5h16.400v1.400h-16.400zM109.5 420.4L102.5 424.2L102.4 416.6ZM93.3 412.3h1.400v16.400h-1.400zM85.8 419.8h16.400v1.400h-16.400zM122.0 426.1L114.2 427.6L116.4 420.4ZM106.5 413.3h1.400v16.400h-1.400zM99.0 420.8h16.400v1.400h-16.400zM134.1 415.8L128.9 421.8L126.3 414.7ZM118.9 413.0h1.400v16.400h-1.400zM111.4 420.5h16.400v1.400h-16.400zM149.9 424.2L142.3 426.8L143.6 419.3ZM133.9 413.4h1.400v16.400h-1.400zM126.4 420.9h16.400v1.400h-16.400zM162.4 424.2L155.1 427.3L155.8 419.7ZM146.3 414.5h1.400v16.400h-1.400zM138.8 422.0h16.400v1.400h-16.400zM177.5 420.7L171.1 425.4L170.1 417.8ZM161.5 414.4h1.400v16.400h-1.400zM154.0 421.9h16.400v1.400h-16.400zM189.2 425.3L181.4 427.1L183.5 419.8ZM173.6 412.9h1.400v16.400h-1.400zM166.1 420.4h16.400v1.400h-16.400zM203.2 420.6L196.6 425.1L195.8 417.6ZM187.0 414.0h1.400v16.400h-1.400zM179.5 421.5h16.400v1.400h-16.400zM217.4 420.5L210.4 424.4L210.3 416.8ZM201.2 412.6h1.400v16.400h-1.400zM193.7 420.1h16.400v1.400h-16.400zM231.3 422.8L224.2 426.5L224.4 418.9ZM215.1 414.3h1.400v16.400h-1.400zM207.6 421.8h16.400v1.400h-16.400zM245.5 424.3L237.8 426.5L239.4 419.1ZM229.6 412.9h1.400v16.400h-1.400zM222.1 420.4h16.400v1.400h-16.400zM257.6 419.1L251.6 424.4L249.9 416.9ZM241.7 414.3h1.400v16.400h-1.400zM234.2 421.8h16.400v1.400h-16.400zM272.5 421.3L265.6 425.4L265.3 417.8ZM256.3 413.8h1.400v16.400h-1.400zM248.8 421.3h16.400v1.400h-16.400zM285.0 419.7L278.2 423.9L277.8 416.3ZM268.8 412.4h1.400v16.400h-1.400zM261.3 419.9h16.400v1.400h-16.400zM299.9 422.1L292.8 425.6L293.1 418.0ZM283.8 413.2h1.400v16.400h-1.400zM276.3 420.7h16.400v1.400h-16.400zM311.7 426.4L304.0 428.4L305.9 421.0ZM296.0 414.4h1.400v16.400h-1.400zM288.5 421.9h16.400v1.400h-16.400zM326.9 419.8L320.6 424.7L319.4 417.2ZM310.9 414.1h1.400v16.400h-1.400zM303.4 421.6h16.400v1.400h-16.400zM339.0 426.2L331.2 428.2L333.1 420.8ZM323.3 414.2h1.400v16.400h-1.400zM315.8 421.7h16.400v1.400h-16.400zM353.0 421.3L346.3 425.6L345.7 418.0ZM336.8 414.2h1.400v16.400h-1.400zM329.3 421.7h16.400v1.400h-16.400zM367.5 421.3L360.5 425.1L360.5 417.5ZM351.3 413.0h1.400v16.400h-1.400zM343.8 420.5h16.400v1.400h-16.400zM381.1 419.8L374.9 424.8L373.5 417.3ZM365.1 414.3h1.400v16.400h-1.400zM357.6 421.8h16.400v1.400h-16.400zM394.3 420.9L387.3 424.6L387.3 417.0ZM378.1 412.6h1.400v16.400h-1.400zM370.6 420.1h16.400v1.400h-16.400zM407.5 426.6L399.6 427.6L402.3 420.5ZM392.3 412.8h1.400v16.400h-1.400zM384.8 420.3h16.400v1.400h-16.400zM67.1 436.3L59.7 439.2L60.6 431.7ZM51.1 426.3h1.400v16.400h-1.400zM43.6 433.8h16.400v1.400h-16.400zM80.4 438.0L72.7 440.1L74.4 432.7ZM64.5 426.3h1.400v16.400h-1.400zM57.0 433.8h16.400v1.400h-16.400zM94.8 432.8L88.4 437.4L87.4 429.9ZM78.7 426.6h1.400v16.400h-1.400zM71.2 434.1h16.400v1.400h-16.400zM109.4 432.6L103.0 437.3L101.9 429.8ZM93.4 426.5h1.400v16.400h-1.400zM85.9 434.0h16.400v1.400h-16.400zM122.4 432.1L116.1 436.9L114.9 429.4ZM106.4 426.3h1.400v16.400h-1.400zM98.9 433.8h16.400v1.400h-16.400zM135.9 435.2L128.6 438.5L129.1 430.9ZM119.7 425.9h1.400v16.400h-1.400zM112.2 433.4h16.400v1.400h-16.400zM149.2 435.7L141.9 438.8L142.6 431.2ZM133.1 425.9h1.400v16.400h-1.400zM125.6 433.4h16.400v1.400h-16.400zM163.6 438.7L156.0 440.9L157.6 433.4ZM147.8 427.1h1.400v16.400h-1.400zM140.3 434.6h16.400v1.400h-16.400zM175.5 429.8L170.2 435.8L167.6 428.6ZM160.2 426.9h1.400v16.400h-1.400zM152.7 434.4h16.400v1.400h-16.400zM191.4 437.0L183.9 439.5L185.2 432.0ZM175.5 426.1h1.400v16.400h-1.400zM168.0 433.6h16.400v1.400h-16.400zM204.4 439.6L196.6 441.2L198.8 433.9ZM188.8 426.9h1.400v16.400h-1.400zM181.3 434.4h16.400v1.400h-16.400zM217.9 436.5L210.8 440.0L211.1 432.4ZM201.8 427.7h1.400v16.400h-1.400zM194.3 435.2h16.400v1.400h-16.400zM230.4 430.0L225.1 435.9L222.6 428.8ZM215.2 427.0h1.400v16.400h-1.400zM207.7 434.5h16.400v1.400h-16.400zM245.4 433.9L239.1 438.7L237.9 431.2ZM229.4 428.1h1.400v16.400h-1.400zM221.9 435.6h16.400v1.400h-16.400zM257.4 430.2L252.3 436.3L249.5 429.3ZM242.3 427.7h1.400v16.400h-1.400zM234.8 435.2h16.400v1.400h-16.400zM272.5 431.8L266.6 437.2L264.8 429.8ZM256.7 427.3h1.400v16.400h-1.400zM249.2 434.8h16.400v1.400h-16.400zM285.1 439.8L277.2 441.2L279.6 434.0ZM269.7 426.7h1.400v16.400h-1.400zM262.2 434.2h16.400v1.400h-16.400zM298.7 435.7L291.4 438.9L292.0 431.3ZM282.5 426.2h1.400v16.400h-1.400zM275.0 433.7h16.400v1.400h-16.400zM312.3 437.6L304.9 440.5L305.8 433.0ZM296.2 427.5h1.400v16.400h-1.400zM288.7 435.0h16.400v1.400h-16.400zM326.0 437.9L318.4 440.0L320.0 432.6ZM310.2 426.3h1.400v16.400h-1.400zM302.7 433.8h16.400v1.400h-16.400zM338.9 440.7L331.1 442.2L333.4 435.0ZM323.5 427.8h1.400v16.400h-1.400zM316.0 435.3h16.400v1.400h-16.400zM354.9 436.9L347.6 440.1L348.3 432.5ZM338.8 427.4h1.400v16.400h-1.400zM331.3 434.9h16.400v1.400h-16.400zM367.3 436.0L360.0 439.2L360.6 431.6ZM351.1 426.4h1.400v16.400h-1.400zM343.6 433.9h16.400v1.400h-16.400zM380.9 436.6L373.6 439.7L374.3 432.2ZM364.8 426.9h1.400v16.400h-1.400zM357.3 434.4h16.400v1.400h-16.400zM394.1 437.4L386.6 440.1L387.8 432.6ZM378.1 426.9h1.400v16.400h-1.400zM370.6 434.4h16.400v1.400h-16.400zM408.1 437.4L400.9 440.6L401.4 433.1ZM392.0 428.0h1.400v16.400h-1.400zM384.5 435.5h16.400v1.400h-16.400zM69.0 451.1L61.5 453.8L62.6 446.3ZM52.9 440.7h1.400v16.400h-1.400zM45.4 448.2h16.400v1.400h-16.400zM80.8 446.4L74.8 451.7L73.1 444.3ZM65.0 441.6h1.400v16.400h-1.400zM57.5 449.1h16.400v1.400h-16.400zM94.8 450.5L87.4 453.3L88.4 445.8ZM78.8 440.3h1.400v16.400h-1.400zM71.3 447.8h16.400v1.400h-16.400zM107.9 448.0L101.0 452.1L100.8 444.5ZM91.7 440.3h1.400v16.400h-1.400zM84.2 447.8h16.400v1.400h-16.400zM122.3 451.9L114.6 454.2L116.2 446.8ZM106.4 440.6h1.400v16.400h-1.400zM98.9 448.1h16.400v1.400h-16.400zM134.9 444.1L129.4 449.9L127.1 442.6ZM119.4 440.6h1.400v16.400h-1.400zM111.9 448.1h16.400v1.400h-16.400zM148.3 444.5L142.5 449.9L140.6 442.5ZM132.6 440.1h1.400v16.400h-1.400zM125.1 447.6h16.400v1.400h-16.400zM161.7 443.2L156.4 449.2L153.8 442.1ZM146.4 440.4h1.400v16.400h-1.400zM138.9 447.9h16.400v1.400h-16.400zM175.8 451.0L168.2 453.2L169.8 445.8ZM160.0 439.5h1.400v16.400h-1.400zM152.5 447.0h16.400v1.400h-16.400zM189.6 453.1L181.8 454.5L184.1 447.3ZM174.2 440.0h1.400v16.400h-1.400zM166.7 447.5h16.400v1.400h-16.400zM204.5 450.7L197.1 453.7L198.0 446.1ZM188.4 440.7h1.400v16.400h-1.400zM180.9 448.2h16.400v1.400h-16.400zM218.5 447.6L212.0 452.1L211.2 444.5ZM202.4 440.9h1.400v16.400h-1.400zM194.9 448.4h16.400v1.400h-16.400zM231.7 453.4L224.0 455.4L225.8 448.0ZM216.0 441.4h1.400v16.400h-1.400zM208.5 448.9h16.400v1.400h-16.400zM244.7 451.8L237.1 454.0L238.7 446.6ZM228.9 440.2h1.400v16.400h-1.400zM221.4 447.7h16.400v1.400h-16.400zM260.0 448.8L252.8 452.2L253.2 444.6ZM243.8 439.8h1.400v16.400h-1.400zM236.3 447.3h16.400v1.400h-16.400zM272.8 446.3L266.6 451.3L265.2 443.8ZM256.9 440.9h1.400v16.400h-1.400zM249.4 448.4h16.400v1.400h-16.400zM285.0 447.2L278.7 452.0L277.5 444.5ZM269.0 441.3h1.400v16.400h-1.400zM261.5 448.8h16.400v1.400h-16.400zM300.7 448.1L293.9 452.4L293.5 444.8ZM284.5 440.9h1.400v16.400h-1.400zM277.0 448.4h16.400v1.400h-16.400zM313.9 447.3L307.5 452.1L306.4 444.5ZM297.8 441.3h1.400v16.400h-1.400zM290.3 448.8h16.400v1.400h-16.400zM326.3 448.0L319.5 452.2L319.1 444.6ZM310.1 440.7h1.400v16.400h-1.400zM302.6 448.2h16.400v1.400h-16.400zM340.7 451.2L333.3 454.2L334.1 446.7ZM324.6 441.3h1.400v16.400h-1.400zM317.1 448.8h16.400v1.400h-16.400zM354.2 454.6L346.3 455.9L348.8 448.7ZM338.9 441.3h1.400v16.400h-1.400zM331.4 448.8h16.400v1.400h-16.400zM367.3 444.5L362.0 450.4L359.4 443.2ZM352.0 441.5h1.400v16.400h-1.400zM344.5 449.0h16.400v1.400h-16.400zM382.0 450.0L374.8 453.5L375.2 445.9ZM365.9 441.0h1.400v16.400h-1.400zM358.4 448.5h16.400v1.400h-16.400zM393.7 442.4L388.5 448.4L385.9 441.3ZM378.5 439.6h1.400v16.400h-1.400zM371.0 447.1h16.400v1.400h-16.400zM407.5 444.0L401.8 449.7L399.7 442.4ZM391.9 440.3h1.400v16.400h-1.400zM384.4 447.8h16.400v1.400h-16.400zM66.8 466.8L59.1 468.8L60.9 461.5ZM51.0 454.9h1.400v16.400h-1.400zM43.5 462.4h16.400v1.400h-16.400zM81.8 463.6L74.6 467.0L75.1 459.4ZM65.7 454.5h1.400v16.400h-1.400zM58.2 462.0h16.400v1.400h-16.400zM94.9 467.7L87.0 469.1L89.4 461.9ZM79.5 454.6h1.400v16.400h-1.400zM72.0 462.1h16.400v1.400h-16.400zM109.0 460.7L102.1 464.8L101.8 457.2ZM92.8 453.1h1.400v16.400h-1.400zM85.3 460.6h16.400v1.400h-16.400zM122.3 457.3L117.1 463.4L114.3 456.3ZM107.1 454.7h1.400v16.400h-1.400zM99.6 462.2h16.400v1.400h-16.400zM136.3 461.1L129.6 465.5L129.0 458.0ZM120.1 454.3h1.400v16.400h-1.400zM112.6 461.8h16.400v1.400h-16.400zM150.3 462.5L143.0 465.8L143.5 458.3ZM134.1 453.2h1.400v16.400h-1.400zM126.6 460.7h16.400v1.400h-16.400zM163.2 467.0L155.4 468.2L157.9 461.1ZM147.9 453.7h1.400v16.400h-1.400zM140.4 461.2h16.400v1.400h-16.400zM175.3 467.5L167.4 468.5L170.1 461.4ZM160.1 453.7h1.400v16.400h-1.400zM152.6 461.2h16.400v1.400h-16.400zM191.4 461.5L184.5 465.4L184.3 457.8ZM175.2 453.6h1.400v16.400h-1.400zM167.7 461.1h16.400v1.400h-16.400zM205.0 462.4L198.3 466.7L197.8 459.1ZM188.8 455.2h1.400v16.400h-1.400zM181.3 462.7h16.400v1.400h-16.400zM217.4 457.5L211.9 463.2L209.6 456.0ZM201.9 453.9h1.400v16.400h-1.400zM194.4 461.4h16.400v1.400h-16.400zM231.7 464.5L224.3 467.5L225.1 460.0ZM215.6 454.6h1.400v16.400h-1.400zM208.1 462.1h16.400v1.400h-16.400zM245.7 459.3L239.7 464.5L238.0 457.1ZM229.8 454.5h1.400v16.400h-1.400zM222.3 462.0h16.400v1.400h-16.400zM258.9 457.4L253.1 462.9L251.1 455.6ZM243.2 453.3h1.400v16.400h-1.400zM235.7 460.8h16.400v1.400h-16.400zM270.9 456.2L265.8 462.3L263.0 455.2ZM255.8 453.7h1.400v16.400h-1.400zM248.3 461.2h16.400v1.400h-16.400zM285.8 456.2L280.7 462.3L277.9 455.3ZM270.7 453.8h1.400v16.400h-1.400zM263.2 461.3h16.400v1.400h-16.400zM300.0 463.5L292.5 466.3L293.6 458.8ZM284.0 453.1h1.400v16.400h-1.400zM276.5 460.6h16.400v1.400h-16.400zM312.0 457.5L306.4 463.1L304.2 455.8ZM296.5 453.7h1.400v16.400h-1.400zM289.0 461.2h16.400v1.400h-16.400zM326.7 468.3L318.8 469.4L321.5 462.2ZM311.5 454.6h1.400v16.400h-1.400zM304.0 462.1h16.400v1.400h-16.400zM340.6 457.1L335.1 462.9L332.7 455.7ZM325.1 453.7h1.400v16.400h-1.400zM317.6 461.2h16.400v1.400h-16.400zM354.0 466.7L346.2 468.4L348.3 461.1ZM338.4 454.1h1.400v16.400h-1.400zM330.9 461.6h16.400v1.400h-16.400zM367.5 457.2L361.9 462.8L359.7 455.5ZM352.0 453.4h1.400v16.400h-1.400zM344.5 460.9h16.400v1.400h-16.400zM381.7 456.1L376.5 462.2L373.8 455.1ZM366.5 453.5h1.400v16.400h-1.400zM359.0 461.0h16.400v1.400h-16.400zM396.3 466.0L388.8 468.5L390.1 461.0ZM380.4 455.2h1.400v16.400h-1.400zM372.9 462.7h16.400v1.400h-16.400zM407.8 459.3L401.7 464.4L400.2 456.9ZM391.9 454.1h1.400v16.400h-1.400zM384.4 461.6h16.400v1.400h-16.400zM68.5 479.8L61.0 482.3L62.3 474.8ZM52.6 468.8h1.400v16.400h-1.400zM45.1 476.3h16.400v1.400h-16.400zM81.2 471.8L75.3 477.2L73.5 469.8ZM65.4 467.3h1.400v16.400h-1.400zM57.9 474.8h16.400v1.400h-16.400zM93.8 471.7L88.5 477.7L86.0 470.5ZM78.5 468.8h1.400v16.400h-1.400zM71.0 476.3h16.400v1.400h-16.400zM108.1 479.4L100.4 481.7L102.0 474.2ZM92.2 468.0h1.400v16.400h-1.400zM84.7 475.5h16.400v1.400h-16.400zM121.7 478.6L114.2 481.2L115.4 473.7ZM105.7 467.9h1.400v16.400h-1.400zM98.2 475.4h16.400v1.400h-16.400zM136.8 479.4L129.0 481.1L131.0 473.8ZM121.1 467.0h1.400v16.400h-1.400zM113.6 474.5h16.400v1.400h-16.400zM150.5 478.7L142.9 481.3L144.2 473.8ZM134.5 467.8h1.400v16.400h-1.400zM127.0 475.3h16.400v1.400h-16.400zM163.7 471.6L158.3 477.4L155.9 470.2ZM148.3 468.2h1.400v16.400h-1.400zM140.8 475.7h16.400v1.400h-16.400zM176.6 478.4L169.3 481.5L170.0 473.9ZM160.5 468.7h1.400v16.400h-1.400zM153.0 476.2h16.400v1.400h-16.400zM190.7 477.4L183.2 480.1L184.4 472.6ZM174.7 466.8h1.400v16.400h-1.400zM167.2 474.3h16.400v1.400h-16.400zM203.5 475.5L196.6 479.5L196.4 471.9ZM187.3 467.8h1.400v16.400h-1.400zM179.8 475.3h16.400v1.400h-16.400zM217.3 480.6L209.4 481.9L211.9 474.7ZM202.0 467.4h1.400v16.400h-1.400zM194.5 474.9h16.400v1.400h-16.400zM230.8 472.7L224.7 477.8L223.3 470.3ZM214.9 467.5h1.400v16.400h-1.400zM207.4 475.0h16.400v1.400h-16.400zM244.2 482.2L236.3 483.3L239.0 476.2ZM229.0 468.5h1.400v16.400h-1.400zM221.5 476.0h16.400v1.400h-16.400zM257.9 479.1L250.4 481.7L251.6 474.2ZM241.9 468.4h1.400v16.400h-1.400zM234.4 475.9h16.400v1.400h-16.400zM272.5 469.5L267.4 475.6L264.6 468.5ZM257.4 467.0h1.400v16.400h-1.400zM249.9 474.5h16.400v1.400h-16.400zM286.4 470.8L281.3 476.9L278.5 469.8ZM271.3 468.3h1.400v16.400h-1.400zM263.8 475.8h16.400v1.400h-16.400zM301.0 477.3L293.6 480.3L294.4 472.7ZM284.9 467.3h1.400v16.400h-1.400zM277.4 474.8h16.400v1.400h-16.400zM313.1 479.5L305.4 481.5L307.2 474.1ZM297.3 467.6h1.400v16.400h-1.400zM289.8 475.1h16.400v1.400h-16.400zM327.8 471.3L322.3 477.1L319.9 469.9ZM312.4 468.0h1.400v16.400h-1.400zM304.9 475.5h16.400v1.400h-16.400zM340.7 473.6L334.3 478.4L333.2 470.9ZM324.6 467.6h1.400v16.400h-1.400zM317.1 475.1h16.400v1.400h-16.400zM354.1 477.7L346.5 480.2L347.8 472.8ZM338.1 466.8h1.400v16.400h-1.400zM330.6 474.3h16.400v1.400h-16.400zM367.1 472.8L361.3 478.3L359.3 470.9ZM351.4 468.5h1.400v16.400h-1.400zM343.9 476.0h16.400v1.400h-16.400zM381.0 481.2L373.3 482.9L375.3 475.6ZM365.4 468.8h1.400v16.400h-1.400zM357.9 476.3h16.400v1.400h-16.400zM395.2 475.3L388.2 479.2L388.2 471.6ZM379.0 467.3h1.400v16.400h-1.400zM371.5 474.8h16.400v1.400h-16.400zM408.5 470.2L403.2 476.1L400.7 468.9ZM393.2 467.1h1.400v16.400h-1.400zM385.7 474.6h16.400v1.400h-16.400zM67.7 489.0L61.1 493.5L60.4 486.0ZM51.6 482.4h1.400v16.400h-1.400zM44.1 489.9h16.400v1.400h-16.400zM82.6 491.2L75.3 494.6L75.8 487.0ZM66.4 482.1h1.400v16.400h-1.400zM58.9 489.6h16.400v1.400h-16.400zM95.7 489.8L88.9 493.9L88.5 486.3ZM79.5 482.3h1.400v16.400h-1.400zM72.0 489.8h16.400v1.400h-16.400zM109.9 491.8L102.4 494.6L103.5 487.1ZM93.8 481.5h1.400v16.400h-1.400zM86.3 489.0h16.400v1.400h-16.400zM122.6 484.4L116.9 490.0L114.9 482.7ZM107.0 480.4h1.400v16.400h-1.400zM99.5 487.9h16.400v1.400h-16.400zM136.5 493.0L128.8 495.1L130.5 487.7ZM120.7 481.3h1.400v16.400h-1.400zM113.2 488.8h16.400v1.400h-16.400zM150.5 488.3L144.0 492.8L143.2 485.2ZM134.4 481.7h1.400v16.400h-1.400zM126.9 489.2h16.400v1.400h-16.400zM163.1 490.3L155.8 493.3L156.6 485.8ZM147.0 480.4h1.400v16.400h-1.400zM139.5 487.9h16.400v1.400h-16.400zM178.2 490.3L170.9 493.4L171.6 485.8ZM162.1 480.6h1.400v16.400h-1.400zM154.6 488.1h16.400v1.400h-16.400zM190.9 488.3L184.2 492.5L183.7 484.9ZM174.8 481.1h1.400v16.400h-1.400zM167.3 488.6h16.400v1.400h-16.400zM204.2 488.8L197.6 493.2L196.9 485.6ZM188.1 481.9h1.400v16.400h-1.400zM180.6 489.4h16.400v1.400h-16.400zM219.0 492.5L211.4 494.6L213.0 487.2ZM203.2 480.9h1.400v16.400h-1.400zM195.7 488.4h16.400v1.400h-16.400zM231.5 494.4L223.6 495.6L226.1 488.4ZM216.2 481.0h1.400v16.400h-1.400zM208.7 488.5h16.400v1.400h-16.400zM245.4 492.7L237.8 494.9L239.4 487.5ZM229.6 481.2h1.400v16.400h-1.400zM222.1 488.7h16.400v1.400h-16.400zM258.6 489.7L251.4 493.1L251.8 485.5ZM242.4 480.7h1.400v16.400h-1.400zM234.9 488.2h16.400v1.400h-16.400zM272.2 488.0L265.9 492.9L264.7 485.4ZM256.2 482.3h1.400v16.400h-1.400zM248.7 489.8h16.400v1.400h-16.400zM285.8 483.9L280.4 489.8L277.9 482.6ZM270.5 480.8h1.400v16.400h-1.400zM263.0 488.3h16.400v1.400h-16.400zM300.2 496.2L292.3 497.3L295.0 490.2ZM285.0 482.5h1.400v16.400h-1.400zM277.5 490.0h16.400v1.400h-16.400zM313.7 491.2L306.2 493.9L307.4 486.4ZM297.7 480.6h1.400v16.400h-1.400zM290.2 488.1h16.400v1.400h-16.400zM326.5 492.6L318.8 494.5L320.7 487.1ZM310.8 480.5h1.400v16.400h-1.400zM303.3 488.0h16.400v1.400h-16.400zM340.8 486.7L334.4 491.4L333.4 483.8ZM324.8 480.5h1.400v16.400h-1.400zM317.3 488.0h16.400v1.400h-16.400zM354.4 490.3L347.1 493.5L347.7 486.0ZM338.2 480.9h1.400v16.400h-1.400zM330.7 488.4h16.400v1.400h-16.400zM367.8 496.0L359.9 497.0L362.6 490.0ZM352.6 482.3h1.400v16.400h-1.400zM345.1 489.8h16.400v1.400h-16.400zM382.4 493.3L374.6 495.2L376.5 487.9ZM366.7 481.2h1.400v16.400h-1.400zM359.2 488.7h16.400v1.400h-16.400zM395.7 490.9L388.5 494.1L389.1 486.5ZM379.6 481.5h1.400v16.400h-1.400zM372.1 489.0h16.400v1.400h-16.400zM409.2 487.0L402.8 491.8L401.7 484.2ZM393.2 481.0h1.400v16.400h-1.400zM385.7 488.5h16.400v1.400h-16.400zM67.1 501.9L60.3 506.0L59.9 498.5ZM50.9 494.5h1.400v16.400h-1.400zM43.4 502.0h16.400v1.400h-16.400zM82.1 506.9L74.3 508.5L76.5 501.2ZM66.6 494.2h1.400v16.400h-1.400zM59.1 501.7h16.400v1.400h-16.400zM95.3 502.0L88.7 506.5L88.0 498.9ZM79.2 495.3h1.400v16.400h-1.400zM71.7 502.8h16.400v1.400h-16.400zM109.7 504.8L102.3 507.5L103.3 500.0ZM93.7 494.4h1.400v16.400h-1.400zM86.2 501.9h16.400v1.400h-16.400zM122.2 503.9L114.9 507.1L115.5 499.5ZM106.0 494.4h1.400v16.400h-1.400zM98.5 501.9h16.400v1.400h-16.400zM135.5 507.7L127.7 509.3L129.9 502.0ZM120.0 494.9h1.400v16.400h-1.400zM112.5 502.4h16.400v1.400h-16.400zM150.7 507.6L143.0 509.7L144.7 502.3ZM134.9 495.8h1.400v16.400h-1.400zM127.4 503.3h16.400v1.400h-16.400zM164.4 499.6L158.1 504.5L156.8 497.0ZM148.4 493.9h1.400v16.400h-1.400zM140.9 501.4h16.400v1.400h-16.400zM175.3 497.9L170.2 504.0L167.4 497.0ZM160.2 495.5h1.400v16.400h-1.400zM152.7 503.0h16.400v1.400h-16.400zM191.7 500.3L185.5 505.3L184.2 497.9ZM175.8 494.9h1.400v16.400h-1.400zM168.3 502.4h16.400v1.400h-16.400zM204.9 501.2L198.2 505.4L197.7 497.8ZM188.8 493.9h1.400v16.400h-1.400zM181.3 501.4h16.400v1.400h-16.400zM218.2 505.2L210.9 508.5L211.5 500.9ZM202.0 495.9h1.400v16.400h-1.400zM194.5 503.4h16.400v1.400h-16.400zM232.4 507.7L224.7 509.7L226.5 502.3ZM216.6 495.8h1.400v16.400h-1.400zM209.1 503.3h16.400v1.400h-16.400zM246.2 507.2L238.4 508.8L240.6 501.5ZM230.6 494.4h1.400v16.400h-1.400zM223.1 501.9h16.400v1.400h-16.400zM257.7 497.1L252.4 503.1L249.8 495.9ZM242.4 494.2h1.400v16.400h-1.400zM234.9 501.7h16.400v1.400h-16.400zM272.7 507.5L265.0 509.4L266.9 502.1ZM257.0 495.4h1.400v16.400h-1.400zM249.5 502.9h16.400v1.400h-16.400zM287.4 507.4L279.7 509.4L281.5 502.0ZM271.6 495.5h1.400v16.400h-1.400zM264.1 503.0h16.400v1.400h-16.400zM300.2 508.1L292.4 509.8L294.5 502.5ZM284.6 495.6h1.400v16.400h-1.400zM277.1 503.1h16.400v1.400h-16.400zM314.1 504.2L306.9 507.6L307.3 500.0ZM297.9 495.1h1.400v16.400h-1.400zM290.4 502.6h16.400v1.400h-16.400zM326.6 501.1L320.4 506.1L319.0 498.6ZM310.6 495.6h1.400v16.400h-1.400zM303.1 503.1h16.400v1.400h-16.400zM340.4 508.3L332.6 510.1L334.6 502.7ZM324.7 495.9h1.400v16.400h-1.400zM317.2 503.4h16.400v1.400h-16.400zM355.1 506.4L347.4 508.4L349.2 501.1ZM339.3 494.6h1.400v16.400h-1.400zM331.8 502.1h16.400v1.400h-16.400zM367.9 504.8L360.4 507.6L361.5 500.1ZM351.8 494.5h1.400v16.400h-1.400zM344.3 502.0h16.400v1.400h-16.400zM382.1 508.5L374.2 509.9L376.6 502.7ZM366.6 495.4h1.400v16.400h-1.400zM359.1 502.9h16.400v1.400h-16.400zM395.2 500.4L388.7 505.0L387.8 497.5ZM379.2 494.1h1.400v16.400h-1.400zM371.7 501.6h16.400v1.400h-16.400zM409.2 498.5L403.7 504.3L401.3 497.1ZM393.7 495.2h1.400v16.400h-1.400zM386.2 502.7h16.400v1.400h-16.400zM67.8 516.8L60.6 520.3L60.9 512.7ZM51.6 508.0h1.400v16.400h-1.400zM44.1 515.5h16.400v1.400h-16.400zM81.5 519.2L73.9 521.3L75.6 513.9ZM65.7 507.5h1.400v16.400h-1.400zM58.2 515.0h16.400v1.400h-16.400zM94.6 513.2L88.6 518.5L86.9 511.1ZM78.8 508.5h1.400v16.400h-1.400zM71.3 516.0h16.400v1.400h-16.400zM109.8 520.1L102.2 522.5L103.7 515.0ZM93.9 508.9h1.400v16.400h-1.400zM86.4 516.4h16.400v1.400h-16.400zM122.8 521.8L114.9 523.1L117.4 515.9ZM107.4 508.5h1.400v16.400h-1.400zM99.9 516.0h16.400v1.400h-16.400zM135.6 513.1L129.5 518.2L127.9 510.8ZM119.7 508.0h1.400v16.400h-1.400zM112.2 515.5h16.400v1.400h-16.400zM151.1 518.5L143.8 521.7L144.4 514.2ZM135.0 509.1h1.400v16.400h-1.400zM127.5 516.6h16.400v1.400h-16.400zM163.3 517.9L155.8 520.7L156.8 513.1ZM147.2 507.5h1.400v16.400h-1.400zM139.7 515.0h16.400v1.400h-16.400zM177.5 516.8L170.6 520.8L170.4 513.2ZM161.3 509.0h1.400v16.400h-1.400zM153.8 516.5h16.400v1.400h-16.400zM190.6 512.8L184.6 518.1L183.0 510.7ZM174.8 508.1h1.400v16.400h-1.400zM167.3 515.6h16.400v1.400h-16.400zM205.0 514.8L198.8 519.9L197.4 512.4ZM189.0 509.5h1.400v16.400h-1.400zM181.5 517.0h16.400v1.400h-16.400zM217.7 518.7L210.1 521.1L211.5 513.7ZM201.8 507.6h1.400v16.400h-1.400zM194.3 515.1h16.400v1.400h-16.400zM231.5 520.1L223.8 522.2L225.5 514.8ZM215.7 508.4h1.400v16.400h-1.400zM208.2 515.9h16.400v1.400h-16.400zM246.3 515.7L239.4 519.7L239.2 512.1ZM230.1 507.9h1.400v16.400h-1.400zM222.6 515.4h16.400v1.400h-16.400zM259.5 512.5L254.0 518.3L251.7 511.1ZM244.1 509.1h1.400v16.400h-1.400zM236.6 516.6h16.400v1.400h-16.400zM272.9 519.8L265.2 521.8L267.0 514.4ZM257.1 508.0h1.400v16.400h-1.400zM249.6 515.5h16.400v1.400h-16.400zM287.7 519.6L280.0 521.9L281.6 514.4ZM271.8 508.2h1.400v16.400h-1.400zM264.3 515.7h16.400v1.400h-16.400zM301.0 513.1L295.0 518.2L293.4 510.8ZM285.2 508.0h1.400v16.400h-1.400zM277.7 515.5h16.400v1.400h-16.400zM313.7 518.3L306.5 521.7L306.9 514.1ZM297.5 509.2h1.400v16.400h-1.400zM290.0 516.7h16.400v1.400h-16.400zM326.9 522.4L319.0 524.0L321.3 516.7ZM311.4 509.6h1.400v16.400h-1.400zM303.9 517.1h16.400v1.400h-16.400zM341.0 520.6L333.2 522.2L335.4 515.0ZM325.5 507.9h1.400v16.400h-1.400zM318.0 515.4h16.400v1.400h-16.400zM354.8 516.9L347.7 520.6L347.8 513.0ZM338.6 508.4h1.400v16.400h-1.400zM331.1 515.9h16.400v1.400h-16.400zM369.4 517.5L362.5 521.4L362.4 513.8ZM353.2 509.6h1.400v16.400h-1.400zM345.7 517.1h16.400v1.400h-16.400zM381.9 517.6L374.7 520.9L375.2 513.4ZM365.8 508.4h1.400v16.400h-1.400zM358.3 515.9h16.400v1.400h-16.400zM395.4 514.2L389.5 519.5L387.7 512.1ZM379.6 509.6h1.400v16.400h-1.400zM372.1 517.1h16.400v1.400h-16.400zM408.9 512.2L403.0 517.5L401.2 510.1ZM393.1 507.6h1.400v16.400h-1.400zM385.6 515.1h16.400v1.400h-16.400zM66.6 526.4L60.7 531.8L58.9 524.4ZM50.9 522.0h1.400v16.400h-1.400zM43.4 529.5h16.400v1.400h-16.400zM82.4 533.6L74.9 536.3L76.1 528.8ZM66.4 523.0h1.400v16.400h-1.400zM58.9 530.5h16.400v1.400h-16.400zM95.8 529.9L89.3 534.4L88.5 526.8ZM79.7 523.3h1.400v16.400h-1.400zM72.2 530.8h16.400v1.400h-16.400zM110.0 530.8L102.9 534.2L103.2 526.6ZM93.9 521.8h1.400v16.400h-1.400zM86.4 529.3h16.400v1.400h-16.400zM122.1 530.2L115.4 534.5L114.8 526.9ZM105.9 523.2h1.400v16.400h-1.400zM98.4 530.7h16.400v1.400h-16.400zM137.0 529.6L130.0 533.3L130.1 525.7ZM120.8 521.2h1.400v16.400h-1.400zM113.3 528.7h16.400v1.400h-16.400zM150.0 526.0L144.3 531.5L142.2 524.2ZM134.4 521.9h1.400v16.400h-1.400zM126.9 529.4h16.400v1.400h-16.400zM162.7 524.7L157.4 530.7L154.8 523.5ZM147.4 521.8h1.400v16.400h-1.400zM139.9 529.3h16.400v1.400h-16.400zM175.7 535.1L167.8 536.0L170.7 528.9ZM160.6 521.1h1.400v16.400h-1.400zM153.1 528.6h16.400v1.400h-16.400zM190.7 528.6L184.1 533.0L183.4 525.5ZM174.6 521.9h1.400v16.400h-1.400zM167.1 529.4h16.400v1.400h-16.400zM205.3 525.0L199.7 530.7L197.4 523.4ZM189.8 521.4h1.400v16.400h-1.400zM182.3 528.9h16.400v1.400h-16.400zM219.6 531.3L212.2 534.4L213.0 526.8ZM203.5 521.6h1.400v16.400h-1.400zM196.0 529.1h16.400v1.400h-16.400zM231.7 534.5L224.0 536.7L225.7 529.3ZM215.8 522.9h1.400v16.400h-1.400zM208.3 530.4h16.400v1.400h-16.400zM246.2 526.2L240.4 531.7L238.5 524.4ZM230.6 522.1h1.400v16.400h-1.400zM223.1 529.6h16.400v1.400h-16.400zM258.7 531.5L251.4 534.8L252.0 527.2ZM242.5 522.1h1.400v16.400h-1.400zM235.0 529.6h16.400v1.400h-16.400zM273.0 529.5L266.5 534.1L265.6 526.5ZM256.9 523.1h1.400v16.400h-1.400zM249.4 530.6h16.400v1.400h-16.400zM286.4 530.3L279.4 534.0L279.5 526.4ZM270.2 521.9h1.400v16.400h-1.400zM262.7 529.4h16.400v1.400h-16.400zM300.6 523.8L295.5 529.9L292.8 522.8ZM285.5 521.2h1.400v16.400h-1.400zM278.0 528.7h16.400v1.400h-16.400zM313.3 525.7L308.1 531.7L305.4 524.5ZM298.1 522.9h1.400v16.400h-1.400zM290.6 530.4h16.400v1.400h-16.400zM327.7 535.1L319.8 536.0L322.6 529.0ZM312.6 521.2h1.400v16.400h-1.400zM305.1 528.7h16.400v1.400h-16.400zM340.3 533.7L332.5 535.4L334.6 528.1ZM324.7 521.2h1.400v16.400h-1.400zM317.2 528.7h16.400v1.400h-16.400zM356.5 529.7L349.6 533.6L349.5 526.0ZM340.3 521.7h1.400v16.400h-1.400zM332.8 529.2h16.400v1.400h-16.400zM369.8 532.1L362.6 535.5L363.0 527.9ZM353.6 523.1h1.400v16.400h-1.400zM346.1 530.6h16.400v1.400h-16.400zM382.4 527.1L376.2 532.1L374.8 524.6ZM366.4 521.7h1.400v16.400h-1.400zM358.9 529.2h16.400v1.400h-16.400zM397.3 534.0L389.7 536.2L391.3 528.8ZM381.5 522.5h1.400v16.400h-1.400zM374.0 530.0h16.400v1.400h-16.400zM409.8 530.0L403.0 534.2L402.6 526.6ZM393.6 522.7h1.400v16.400h-1.400zM386.1 530.2h16.400v1.400h-16.400zM66.7 548.7L58.8 549.9L61.4 542.8ZM51.4 535.3h1.400v16.400h-1.400zM43.9 542.8h16.400v1.400h-16.400zM80.3 547.7L72.7 550.0L74.2 542.6ZM64.4 536.4h1.400v16.400h-1.400zM56.9 543.9h16.400v1.400h-16.400zM95.9 548.1L88.2 550.0L90.0 542.7ZM80.1 536.1h1.400v16.400h-1.400zM72.6 543.6h16.400v1.400h-16.400zM109.1 548.4L101.2 549.5L103.9 542.4ZM93.9 534.8h1.400v16.400h-1.400zM86.4 542.3h16.400v1.400h-16.400zM122.0 541.0L115.8 546.1L114.4 538.6ZM106.0 535.7h1.400v16.400h-1.400zM98.5 543.2h16.400v1.400h-16.400zM136.6 539.6L131.3 545.6L128.7 538.5ZM121.3 536.8h1.400v16.400h-1.400zM113.8 544.3h16.400v1.400h-16.400zM149.6 539.9L143.6 545.2L141.9 537.8ZM133.8 535.3h1.400v16.400h-1.400zM126.3 542.8h16.400v1.400h-16.400zM163.3 540.2L157.5 545.6L155.6 538.2ZM147.6 535.8h1.400v16.400h-1.400zM140.1 543.3h16.400v1.400h-16.400zM177.8 538.4L172.4 544.2L170.0 537.0ZM162.4 535.1h1.400v16.400h-1.400zM154.9 542.6h16.400v1.400h-16.400zM191.1 539.3L185.8 545.2L183.2 538.1ZM175.8 536.3h1.400v16.400h-1.400zM168.3 543.8h16.400v1.400h-16.400zM205.7 545.3L198.6 548.8L198.9 541.2ZM189.6 536.4h1.400v16.400h-1.400zM182.1 543.9h16.400v1.400h-16.400zM218.4 548.0L210.6 549.7L212.7 542.4ZM202.8 535.4h1.400v16.400h-1.400zM195.3 542.9h16.400v1.400h-16.400zM232.1 543.2L225.2 547.2L224.9 539.6ZM215.9 535.5h1.400v16.400h-1.400zM208.4 543.0h16.400v1.400h-16.400zM245.9 548.3L238.0 549.5L240.6 542.4ZM230.6 534.9h1.400v16.400h-1.400zM223.1 542.4h16.400v1.400h-16.400zM258.4 549.4L250.6 550.8L253.0 543.6ZM243.0 536.4h1.400v16.400h-1.400zM235.5 543.9h16.400v1.400h-16.400zM272.2 538.0L266.8 543.8L264.3 536.7ZM256.8 534.8h1.400v16.400h-1.400zM249.3 542.3h16.400v1.400h-16.400zM286.2 545.3L278.9 548.5L279.5 541.0ZM270.0 535.9h1.400v16.400h-1.400zM262.5 543.4h16.400v1.400h-16.400zM300.5 543.8L293.9 548.2L293.3 540.6ZM284.4 536.9h1.400v16.400h-1.400zM276.9 544.4h16.400v1.400h-16.400zM314.9 540.6L309.3 546.3L307.1 539.0ZM299.3 536.9h1.400v16.400h-1.400zM291.8 544.4h16.400v1.400h-16.400zM326.9 548.4L319.0 549.6L321.7 542.5ZM311.7 534.9h1.400v16.400h-1.400zM304.2 542.4h16.400v1.400h-16.400zM340.9 541.1L334.8 546.2L333.3 538.7ZM325.0 535.8h1.400v16.400h-1.400zM317.5 543.3h16.400v1.400h-16.400zM356.2 544.7L349.1 548.1L349.4 540.5ZM340.0 535.7h1.400v16.400h-1.400zM332.5 543.2h16.400v1.400h-16.400zM368.8 545.5L361.4 548.5L362.3 541.0ZM352.7 535.6h1.400v16.400h-1.400zM345.2 543.1h16.400v1.400h-16.400zM382.5 549.7L374.6 550.9L377.2 543.7ZM367.3 536.2h1.400v16.400h-1.400zM359.8 543.7h16.400v1.400h-16.400zM397.3 546.8L389.9 549.6L390.9 542.1ZM381.2 536.6h1.400v16.400h-1.400zM373.7 544.1h16.400v1.400h-16.400zM410.9 541.9L404.2 546.3L403.6 538.7ZM394.8 535.0h1.400v16.400h-1.400zM387.3 542.5h16.400v1.400h-16.400zM68.7 556.5L61.9 560.6L61.6 553.0ZM52.6 548.9h1.400v16.400h-1.400zM45.1 556.4h16.400v1.400h-16.400zM81.3 553.3L75.6 558.8L73.6 551.5ZM65.7 549.1h1.400v16.400h-1.400zM58.2 556.6h16.400v1.400h-16.400zM95.0 562.4L87.1 563.5L89.8 556.4ZM79.8 548.7h1.400v16.400h-1.400zM72.3 556.2h16.400v1.400h-16.400zM107.5 562.8L99.6 563.7L102.4 556.6ZM92.4 548.8h1.400v16.400h-1.400zM84.9 556.3h16.400v1.400h-16.400zM121.7 555.2L115.7 560.4L114.1 552.9ZM105.9 550.2h1.400v16.400h-1.400zM98.4 557.7h16.400v1.400h-16.400zM135.8 551.8L130.5 557.8L127.9 550.7ZM120.5 549.0h1.400v16.400h-1.400zM113.0 556.5h16.400v1.400h-16.400zM149.8 555.8L143.6 560.8L142.2 553.4ZM133.9 550.5h1.400v16.400h-1.400zM126.4 558.0h16.400v1.400h-16.400zM163.9 555.3L157.4 559.8L156.5 552.3ZM147.8 548.8h1.400v16.400h-1.400zM140.3 556.3h16.400v1.400h-16.400zM177.7 562.7L169.8 564.1L172.1 556.9ZM162.2 549.7h1.400v16.400h-1.400zM154.7 557.2h16.400v1.400h-16.400zM191.8 561.5L183.9 562.9L186.3 555.7ZM176.3 548.5h1.400v16.400h-1.400zM168.8 556.0h16.400v1.400h-16.400zM204.6 562.3L196.8 564.2L198.8 556.8ZM188.9 550.1h1.400v16.400h-1.400zM181.4 557.6h16.400v1.400h-16.400zM218.7 553.2L213.4 559.2L210.8 552.0ZM203.4 550.3h1.400v16.400h-1.400zM195.9 557.8h16.400v1.400h-16.400zM231.2 560.5L223.5 562.7L225.2 555.3ZM215.4 548.9h1.400v16.400h-1.400zM207.9 556.4h16.400v1.400h-16.400zM245.2 559.4L237.7 562.0L238.9 554.5ZM229.2 548.7h1.400v16.400h-1.400zM221.7 556.2h16.400v1.400h-16.400zM260.9 559.5L253.6 562.5L254.4 555.0ZM244.8 549.6h1.400v16.400h-1.400zM237.3 557.1h16.400v1.400h-16.400zM273.6 563.0L265.7 564.0L268.5 556.9ZM258.5 549.1h1.400v16.400h-1.400zM251.0 556.6h16.400v1.400h-16.400zM287.3 552.3L282.0 558.2L279.5 551.1ZM272.0 549.3h1.400v16.400h-1.400zM264.5 556.8h16.400v1.400h-16.400zM300.0 554.0L294.3 559.6L292.3 552.3ZM284.4 550.0h1.400v16.400h-1.400zM276.9 557.5h16.400v1.400h-16.400zM315.5 559.7L307.9 562.1L309.4 554.7ZM299.6 548.5h1.400v16.400h-1.400zM292.1 556.0h16.400v1.400h-16.400zM327.9 563.0L320.0 564.3L322.6 557.1ZM312.6 549.7h1.400v16.400h-1.400zM305.1 557.2h16.400v1.400h-16.400zM341.5 559.4L334.1 562.2L335.1 554.7ZM325.5 549.1h1.400v16.400h-1.400zM318.0 556.6h16.400v1.400h-16.400zM355.0 554.6L348.7 559.4L347.5 551.9ZM339.0 548.7h1.400v16.400h-1.400zM331.5 556.2h16.400v1.400h-16.400zM369.1 558.9L361.9 562.2L362.4 554.6ZM353.0 549.6h1.400v16.400h-1.400zM345.5 557.1h16.400v1.400h-16.400zM383.4 560.0L375.8 562.3L377.3 554.9ZM367.5 548.7h1.400v16.400h-1.400zM360.0 556.2h16.400v1.400h-16.400zM395.3 552.6L389.8 558.3L387.5 551.1ZM379.9 549.0h1.400v16.400h-1.400zM372.4 556.5h16.400v1.400h-16.400zM411.1 554.8L404.7 559.5L403.6 552.0ZM395.0 548.7h1.400v16.400h-1.400zM387.5 556.2h16.400v1.400h-16.400zM67.3 567.7L61.1 572.7L59.7 565.2ZM51.4 562.3h1.400v16.400h-1.400zM43.9 569.8h16.400v1.400h-16.400zM81.7 566.9L76.1 572.5L73.9 565.2ZM66.2 563.1h1.400v16.400h-1.400zM58.7 570.6h16.400v1.400h-16.400zM94.5 570.1L87.5 574.0L87.4 566.4ZM78.3 562.1h1.400v16.400h-1.400zM70.8 569.6h16.400v1.400h-16.400zM108.4 567.4L102.6 572.8L100.7 565.5ZM92.7 563.1h1.400v16.400h-1.400zM85.2 570.6h16.400v1.400h-16.400zM122.9 567.2L116.8 572.3L115.3 564.9ZM107.0 562.1h1.400v16.400h-1.400zM99.5 569.6h16.400v1.400h-16.400zM135.3 567.4L129.6 573.0L127.5 565.7ZM119.7 563.4h1.400v16.400h-1.400zM112.2 570.9h16.400v1.400h-16.400zM150.0 572.8L142.5 575.6L143.6 568.1ZM133.9 562.5h1.400v16.400h-1.400zM126.4 570.0h16.400v1.400h-16.400zM162.6 566.5L157.4 572.6L154.7 565.6ZM147.4 564.0h1.400v16.400h-1.400zM139.9 571.5h16.400v1.400h-16.400zM177.2 573.9L169.6 576.5L170.9 569.0ZM161.2 563.1h1.400v16.400h-1.400zM153.7 570.6h16.400v1.400h-16.400zM190.8 567.4L184.8 572.7L183.1 565.3ZM175.0 562.8h1.400v16.400h-1.400zM167.5 570.3h16.400v1.400h-16.400zM205.1 566.9L199.8 572.9L197.2 565.8ZM189.8 564.1h1.400v16.400h-1.400zM182.3 571.6h16.400v1.400h-16.400zM217.8 575.5L210.0 576.9L212.4 569.7ZM202.5 562.3h1.400v16.400h-1.400zM195.0 569.8h16.400v1.400h-16.400zM232.8 567.2L226.8 572.5L225.2 565.0ZM217.0 562.3h1.400v16.400h-1.400zM209.5 569.8h16.400v1.400h-16.400zM244.5 577.2L236.6 578.5L239.1 571.3ZM229.1 563.9h1.400v16.400h-1.400zM221.6 571.4h16.400v1.400h-16.400zM259.3 576.2L251.6 577.9L253.7 570.6ZM243.8 563.7h1.400v16.400h-1.400zM236.3 571.2h16.400v1.400h-16.400zM273.0 576.6L265.1 578.2L267.4 570.9ZM257.4 563.8h1.400v16.400h-1.400zM249.9 571.3h16.400v1.400h-16.400zM286.9 566.2L281.2 571.8L279.1 564.5ZM271.3 562.3h1.400v16.400h-1.400zM263.8 569.8h16.400v1.400h-16.400zM300.2 570.7L293.4 574.8L293.1 567.2ZM284.0 563.1h1.400v16.400h-1.400zM276.5 570.6h16.400v1.400h-16.400zM314.6 567.4L309.1 573.1L306.8 565.9ZM299.1 563.9h1.400v16.400h-1.400zM291.6 571.4h16.400v1.400h-16.400zM327.0 576.5L319.2 577.8L321.6 570.6ZM311.6 563.3h1.400v16.400h-1.400zM304.1 570.8h16.400v1.400h-16.400zM341.6 575.2L333.9 577.1L335.9 569.7ZM326.0 563.0h1.400v16.400h-1.400zM318.5 570.5h16.400v1.400h-16.400zM355.3 572.2L348.0 575.3L348.7 567.8ZM339.2 562.5h1.400v16.400h-1.400zM331.7 570.0h16.400v1.400h-16.400zM369.9 571.6L363.1 575.6L362.8 568.0ZM353.8 563.9h1.400v16.400h-1.400zM346.3 571.4h16.400v1.400h-16.400zM382.7 569.3L376.2 573.9L375.2 566.4ZM366.6 563.0h1.400v16.400h-1.400zM359.1 570.5h16.400v1.400h-16.400zM397.6 576.0L389.8 578.0L391.7 570.6ZM381.8 564.0h1.400v16.400h-1.400zM374.3 571.5h16.400v1.400h-16.400zM410.4 570.1L403.5 574.0L403.3 566.4ZM394.2 562.2h1.400v16.400h-1.400zM386.7 569.7h16.400v1.400h-16.400zM68.9 587.4L61.5 590.5L62.3 582.9ZM52.8 577.6h1.400v16.400h-1.400zM45.3 585.1h16.400v1.400h-16.400zM81.1 579.6L75.4 585.2L73.3 577.9ZM65.5 575.6h1.400v16.400h-1.400zM58.0 583.1h16.400v1.400h-16.400zM96.0 581.3L90.0 586.5L88.4 579.0ZM80.2 576.4h1.400v16.400h-1.400zM72.7 583.9h16.400v1.400h-16.400zM109.2 579.9L103.9 585.8L101.3 578.6ZM93.9 576.9h1.400v16.400h-1.400zM86.4 584.4h16.400v1.400h-16.400zM123.4 586.6L115.9 589.2L117.1 581.7ZM107.4 575.9h1.400v16.400h-1.400zM99.9 583.4h16.400v1.400h-16.400zM137.3 584.8L130.1 588.3L130.4 580.7ZM121.1 576.0h1.400v16.400h-1.400zM113.6 583.5h16.400v1.400h-16.400zM149.6 581.4L143.9 586.9L141.8 579.6ZM134.0 577.4h1.400v16.400h-1.400zM126.5 584.9h16.400v1.400h-16.400zM164.2 588.5L156.4 590.1L158.6 582.8ZM148.6 575.9h1.400v16.400h-1.400zM141.1 583.4h16.400v1.400h-16.400zM177.0 581.8L170.8 586.8L169.4 579.3ZM161.0 576.4h1.400v16.400h-1.400zM153.5 583.9h16.400v1.400h-16.400zM191.6 583.5L184.9 587.8L184.3 580.2ZM175.4 576.3h1.400v16.400h-1.400zM167.9 583.8h16.400v1.400h-16.400zM204.0 580.2L198.2 585.7L196.2 578.4ZM188.3 576.0h1.400v16.400h-1.400zM180.8 583.5h16.400v1.400h-16.400zM219.3 583.0L213.1 587.9L211.8 580.4ZM203.3 577.5h1.400v16.400h-1.400zM195.8 585.0h16.400v1.400h-16.400zM231.3 588.9L223.5 590.8L225.5 583.5ZM215.6 576.7h1.400v16.400h-1.400zM208.1 584.2h16.400v1.400h-16.400zM247.0 581.8L240.5 586.5L239.5 578.9ZM230.9 575.6h1.400v16.400h-1.400zM223.4 583.1h16.400v1.400h-16.400zM260.5 580.0L254.7 585.5L252.8 578.1ZM244.8 575.8h1.400v16.400h-1.400zM237.3 583.3h16.400v1.400h-16.400zM274.2 584.8L267.2 588.7L267.2 581.1ZM258.0 576.7h1.400v16.400h-1.400zM250.5 584.2h16.400v1.400h-16.400zM287.8 582.2L281.4 587.0L280.4 579.4ZM271.8 576.2h1.400v16.400h-1.400zM264.3 583.7h16.400v1.400h-16.400zM300.5 589.7L292.7 591.2L295.0 584.0ZM285.1 576.8h1.400v16.400h-1.400zM277.6 584.3h16.400v1.400h-16.400zM314.3 580.6L308.8 586.3L306.5 579.0ZM298.8 576.9h1.400v16.400h-1.400zM291.3 584.4h16.400v1.400h-16.400zM327.8 590.2L319.9 591.3L322.6 584.2ZM312.6 576.5h1.400v16.400h-1.400zM305.1 584.0h16.400v1.400h-16.400zM340.7 579.9L335.4 585.8L332.8 578.6ZM325.4 576.9h1.400v16.400h-1.400zM317.9 584.4h16.400v1.400h-16.400zM355.7 588.8L347.8 590.4L350.1 583.1ZM340.2 576.0h1.400v16.400h-1.400zM332.7 583.5h16.400v1.400h-16.400zM370.6 587.4L363.1 590.3L364.1 582.7ZM354.5 577.2h1.400v16.400h-1.400zM347.0 584.7h16.400v1.400h-16.400zM383.4 580.7L377.4 585.9L375.7 578.5ZM367.6 575.9h1.400v16.400h-1.400zM360.1 583.4h16.400v1.400h-16.400zM397.5 583.7L390.6 587.6L390.5 580.0ZM381.3 575.7h1.400v16.400h-1.400zM373.8 583.2h16.400v1.400h-16.400zM410.3 582.1L404.0 587.0L402.8 579.5ZM394.3 576.4h1.400v16.400h-1.400zM386.8 583.9h16.400v1.400h-16.400zM66.8 595.4L60.6 600.4L59.2 593.0ZM50.9 590.1h1.400v16.400h-1.400zM43.4 597.6h16.400v1.400h-16.400zM81.3 593.9L75.4 599.2L73.7 591.8ZM65.5 589.2h1.400v16.400h-1.400zM58.0 596.7h16.400v1.400h-16.400zM95.7 595.9L89.1 600.4L88.3 592.8ZM79.6 589.3h1.400v16.400h-1.400zM72.1 596.8h16.400v1.400h-16.400zM108.6 604.7L100.7 605.7L103.5 598.6ZM93.5 590.8h1.400v16.400h-1.400zM86.0 598.3h16.400v1.400h-16.400zM121.9 603.2L113.9 604.1L116.8 597.1ZM106.8 589.2h1.400v16.400h-1.400zM99.3 596.7h16.400v1.400h-16.400zM135.9 603.1L128.0 604.5L130.5 597.3ZM120.5 589.9h1.400v16.400h-1.400zM113.0 597.4h16.400v1.400h-16.400zM150.7 592.9L145.2 598.6L142.9 591.4ZM135.2 589.4h1.400v16.400h-1.400zM127.7 596.9h16.400v1.400h-16.400zM164.8 597.0L158.5 601.9L157.2 594.4ZM148.8 591.3h1.400v16.400h-1.400zM141.3 598.8h16.400v1.400h-16.400zM177.7 603.7L169.9 605.3L172.2 598.0ZM162.2 590.9h1.400v16.400h-1.400zM154.7 598.4h16.400v1.400h-16.400zM190.1 594.3L184.8 600.2L182.2 593.0ZM174.8 591.3h1.400v16.400h-1.400zM167.3 598.8h16.400v1.400h-16.400zM205.2 602.1L197.6 604.6L198.9 597.1ZM189.2 591.2h1.400v16.400h-1.400zM181.7 598.7h16.400v1.400h-16.400zM219.9 595.2L213.6 600.1L212.4 592.6ZM203.9 589.5h1.400v16.400h-1.400zM196.4 597.0h16.400v1.400h-16.400zM232.5 604.9L224.6 605.9L227.3 598.9ZM217.3 591.1h1.400v16.400h-1.400zM209.8 598.6h16.400v1.400h-16.400zM244.6 592.4L239.5 598.5L236.7 591.4ZM229.5 589.9h1.400v16.400h-1.400zM222.0 597.4h16.400v1.400h-16.400zM260.5 601.3L252.8 603.3L254.6 595.9ZM244.7 589.4h1.400v16.400h-1.400zM237.2 596.9h16.400v1.400h-16.400zM274.9 596.0L268.4 600.6L267.5 593.1ZM258.8 589.7h1.400v16.400h-1.400zM251.3 597.2h16.400v1.400h-16.400zM288.0 593.4L282.3 599.0L280.2 591.6ZM272.4 589.4h1.400v16.400h-1.400zM264.9 596.9h16.400v1.400h-16.400zM300.5 593.5L295.4 599.7L292.6 592.6ZM285.4 591.1h1.400v16.400h-1.400zM277.9 598.6h16.400v1.400h-16.400zM314.2 601.8L306.5 603.7L308.4 596.3ZM298.5 589.7h1.400v16.400h-1.400zM291.0 597.2h16.400v1.400h-16.400zM329.1 598.3L322.0 602.0L322.2 594.4ZM312.9 589.8h1.400v16.400h-1.400zM305.4 597.3h16.400v1.400h-16.400zM341.4 594.0L335.5 599.4L333.7 592.0ZM325.6 589.5h1.400v16.400h-1.400zM318.1 597.0h16.400v1.400h-16.400zM355.8 598.6L349.0 602.7L348.6 595.1ZM339.6 591.2h1.400v16.400h-1.400zM332.1 598.7h16.400v1.400h-16.400zM370.0 604.1L362.1 605.5L364.5 598.3ZM354.5 591.1h1.400v16.400h-1.400zM347.0 598.6h16.400v1.400h-16.400zM383.0 595.7L377.0 600.9L375.3 593.5ZM367.1 590.8h1.400v16.400h-1.400zM359.6 598.3h16.400v1.400h-16.400zM396.9 599.3L389.7 602.7L390.2 595.1ZM380.8 590.3h1.400v16.400h-1.400zM373.3 597.8h16.400v1.400h-16.400zM411.3 593.8L405.6 599.4L403.5 592.1ZM395.7 589.9h1.400v16.400h-1.400zM388.2 597.4h16.400v1.400h-16.400zM68.3 608.4L62.4 613.7L60.6 606.4ZM52.6 603.9h1.400v16.400h-1.400zM45.1 611.4h16.400v1.400h-16.400zM81.6 616.0L73.9 618.3L75.5 610.9ZM65.7 604.6h1.400v16.400h-1.400zM58.2 612.1h16.400v1.400h-16.400zM94.4 615.6L86.9 618.2L88.1 610.7ZM78.4 604.9h1.400v16.400h-1.400zM70.9 612.4h16.400v1.400h-16.400zM109.1 608.2L103.2 613.5L101.4 606.1ZM93.3 603.6h1.400v16.400h-1.400zM85.8 611.1h16.400v1.400h-16.400zM122.8 606.6L117.4 612.4L115.0 605.2ZM107.4 603.3h1.400v16.400h-1.400zM99.9 610.8h16.400v1.400h-16.400zM137.0 607.3L131.6 613.1L129.2 605.9ZM121.6 604.0h1.400v16.400h-1.400zM114.1 611.5h16.400v1.400h-16.400zM150.1 613.9L142.8 617.1L143.5 609.5ZM134.0 604.4h1.400v16.400h-1.400zM126.5 611.9h16.400v1.400h-16.400zM164.1 611.2L157.1 615.1L157.1 607.5ZM147.9 603.1h1.400v16.400h-1.400zM140.4 610.6h16.400v1.400h-16.400zM178.3 608.3L172.1 613.3L170.7 605.8ZM162.3 602.8h1.400v16.400h-1.400zM154.8 610.3h16.400v1.400h-16.400zM192.1 608.0L186.1 613.3L184.4 605.9ZM176.2 603.3h1.400v16.400h-1.400zM168.7 610.8h16.400v1.400h-16.400zM205.7 614.4L198.4 617.6L199.1 610.0ZM189.6 604.9h1.400v16.400h-1.400zM182.1 612.4h16.400v1.400h-16.400zM219.2 614.8L211.7 617.5L212.9 610.0ZM203.2 604.2h1.400v16.400h-1.400zM195.7 611.7h16.400v1.400h-16.400zM232.1 614.6L224.4 616.6L226.2 609.2ZM216.4 602.7h1.400v16.400h-1.400zM208.9 610.2h16.400v1.400h-16.400zM245.7 612.2L238.5 615.6L239.0 608.0ZM229.5 603.0h1.400v16.400h-1.400zM222.0 610.5h16.400v1.400h-16.400zM260.4 608.3L254.4 613.6L252.7 606.2ZM244.6 603.7h1.400v16.400h-1.400zM237.1 611.2h16.400v1.400h-16.400zM273.4 607.8L268.1 613.7L265.6 606.5ZM258.1 604.7h1.400v16.400h-1.400zM250.6 612.2h16.400v1.400h-16.400zM287.0 614.2L279.4 616.7L280.7 609.2ZM271.0 603.2h1.400v16.400h-1.400zM263.5 610.7h16.400v1.400h-16.400zM302.1 609.9L295.4 614.1L294.8 606.6ZM285.9 602.7h1.400v16.400h-1.400zM278.4 610.2h16.400v1.400h-16.400zM314.2 614.3L306.7 616.9L308.0 609.4ZM298.2 603.5h1.400v16.400h-1.400zM290.7 611.0h16.400v1.400h-16.400zM327.5 606.5L322.2 612.4L319.6 605.3ZM312.2 603.5h1.400v16.400h-1.400zM304.7 611.0h16.400v1.400h-16.400zM342.0 615.8L334.3 617.9L336.1 610.5ZM326.2 604.0h1.400v16.400h-1.400zM318.7 611.5h16.400v1.400h-16.400zM356.9 609.4L350.4 614.0L349.4 606.5ZM340.8 603.1h1.400v16.400h-1.400zM333.3 610.6h16.400v1.400h-16.400zM370.3 616.0L362.5 617.8L364.5 610.5ZM354.6 603.7h1.400v16.400h-1.400zM347.1 611.2h16.400v1.400h-16.400zM382.9 617.2L375.1 619.0L377.2 611.7ZM367.3 604.8h1.400v16.400h-1.400zM359.8 612.3h16.400v1.400h-16.400zM397.5 611.1L390.5 615.0L390.5 607.4ZM381.3 603.0h1.400v16.400h-1.400zM373.8 610.5h16.400v1.400h-16.400zM409.8 606.7L404.7 612.8L401.9 605.7ZM394.7 604.1h1.400v16.400h-1.400zM387.2 611.6h16.400v1.400h-16.400zM68.0 631.0L60.2 632.5L62.5 625.2ZM52.6 618.0h1.400v16.400h-1.400zM45.1 625.5h16.400v1.400h-16.400zM81.5 624.8L74.6 628.7L74.4 621.1ZM65.3 616.9h1.400v16.400h-1.400zM57.8 624.4h16.400v1.400h-16.400zM93.8 630.3L86.0 632.0L88.1 624.7ZM78.2 617.7h1.400v16.400h-1.400zM70.7 625.2h16.400v1.400h-16.400zM109.1 622.5L102.9 627.5L101.6 620.0ZM93.2 617.1h1.400v16.400h-1.400zM85.7 624.6h16.400v1.400h-16.400zM122.9 621.8L117.0 627.1L115.2 619.8ZM107.1 617.3h1.400v16.400h-1.400zM99.6 624.8h16.400v1.400h-16.400zM137.2 630.0L129.5 631.9L131.4 624.6ZM121.5 617.9h1.400v16.400h-1.400zM114.0 625.4h16.400v1.400h-16.400zM149.9 624.9L143.3 629.4L142.5 621.8ZM133.8 618.3h1.400v16.400h-1.400zM126.3 625.8h16.400v1.400h-16.400zM162.8 621.7L157.0 627.2L155.0 619.8ZM147.1 617.5h1.400v16.400h-1.400zM139.6 625.0h16.400v1.400h-16.400zM177.8 623.5L171.2 628.0L170.4 620.4ZM161.7 616.8h1.400v16.400h-1.400zM154.2 624.3h16.400v1.400h-16.400zM190.8 627.3L183.6 630.6L184.1 623.0ZM174.6 618.0h1.400v16.400h-1.400zM167.1 625.5h16.400v1.400h-16.400zM203.4 620.0L198.3 626.1L195.5 619.0ZM188.3 617.5h1.400v16.400h-1.400zM180.8 625.0h16.400v1.400h-16.400zM220.3 625.0L213.3 628.7L213.4 621.1ZM204.1 616.6h1.400v16.400h-1.400zM196.6 624.1h16.400v1.400h-16.400zM232.4 625.2L225.6 629.3L225.3 621.7ZM216.3 617.6h1.400v16.400h-1.400zM208.8 625.1h16.400v1.400h-16.400zM246.9 626.1L239.8 629.8L239.9 622.2ZM230.7 617.7h1.400v16.400h-1.400zM223.2 625.2h16.400v1.400h-16.400zM260.7 620.4L255.1 626.1L252.9 618.8ZM245.1 616.7h1.400v16.400h-1.400zM237.6 624.2h16.400v1.400h-16.400zM273.8 627.7L266.2 630.3L267.5 622.8ZM257.8 617.0h1.400v16.400h-1.400zM250.3 624.5h16.400v1.400h-16.400zM286.7 630.2L279.0 632.2L280.8 624.8ZM271.0 618.3h1.400v16.400h-1.400zM263.5 625.8h16.400v1.400h-16.400zM301.9 630.4L294.2 632.1L296.3 624.8ZM286.4 617.9h1.400v16.400h-1.400zM278.9 625.4h16.400v1.400h-16.400zM314.5 624.2L308.0 629.0L307.0 621.4ZM298.4 618.2h1.400v16.400h-1.400zM290.9 625.7h16.400v1.400h-16.400zM329.8 628.0L322.3 630.6L323.5 623.1ZM313.8 617.3h1.400v16.400h-1.400zM306.3 624.8h16.400v1.400h-16.400zM343.7 624.1L337.1 628.5L336.4 620.9ZM327.6 617.3h1.400v16.400h-1.400zM320.1 624.8h16.400v1.400h-16.400zM356.1 627.7L348.5 630.1L350.0 622.6ZM340.2 616.5h1.400v16.400h-1.400zM332.7 624.0h16.400v1.400h-16.400zM369.3 619.5L363.9 625.4L361.4 618.2ZM354.0 616.4h1.400v16.400h-1.400zM346.5 623.9h16.400v1.400h-16.400zM383.5 630.5L375.7 632.2L377.9 624.9ZM368.0 617.9h1.400v16.400h-1.400zM360.5 625.4h16.400v1.400h-16.400zM397.8 631.7L389.9 632.8L392.5 625.7ZM382.5 618.2h1.400v16.400h-1.400zM375.0 625.7h16.400v1.400h-16.400zM412.5 625.0L405.5 628.9L405.5 621.3ZM396.3 616.9h1.400v16.400h-1.400zM388.8 624.4h16.400v1.400h-16.400zM68.1 639.2L61.0 642.9L61.1 635.3ZM51.9 630.9h1.400v16.400h-1.400zM44.4 638.4h16.400v1.400h-16.400zM82.3 639.6L75.3 643.2L75.4 635.7ZM66.1 631.1h1.400v16.400h-1.400zM58.6 638.6h16.400v1.400h-16.400zM95.0 640.0L87.9 643.6L88.1 636.0ZM78.8 631.3h1.400v16.400h-1.400zM71.3 638.8h16.400v1.400h-16.400zM109.2 633.0L104.1 639.1L101.3 632.0ZM94.1 630.4h1.400v16.400h-1.400zM86.6 637.9h16.400v1.400h-16.400zM122.9 643.6L115.0 644.7L117.7 637.6ZM107.7 629.9h1.400v16.400h-1.400zM100.2 637.4h16.400v1.400h-16.400zM135.9 635.4L129.9 640.5L128.3 633.1ZM120.1 630.4h1.400v16.400h-1.400zM112.6 637.9h16.400v1.400h-16.400zM150.7 636.4L144.8 641.8L142.9 634.4ZM134.9 632.0h1.400v16.400h-1.400zM127.4 639.5h16.400v1.400h-16.400zM164.2 634.2L158.6 639.9L156.4 632.6ZM148.7 630.6h1.400v16.400h-1.400zM141.2 638.1h16.400v1.400h-16.400zM178.7 635.9L172.5 640.9L171.1 633.5ZM162.8 630.6h1.400v16.400h-1.400zM155.3 638.1h16.400v1.400h-16.400zM190.9 643.8L183.2 645.8L185.0 638.5ZM175.1 631.9h1.400v16.400h-1.400zM167.6 639.4h16.400v1.400h-16.400zM205.0 634.2L199.8 640.2L197.1 633.1ZM189.8 631.4h1.400v16.400h-1.400zM182.3 638.9h16.400v1.400h-16.400zM219.1 635.5L213.6 641.3L211.2 634.0ZM203.6 632.1h1.400v16.400h-1.400zM196.1 639.6h16.400v1.400h-16.400zM233.0 642.3L225.5 645.0L226.6 637.5ZM217.0 631.7h1.400v16.400h-1.400zM209.5 639.2h16.400v1.400h-16.400zM247.0 636.4L241.1 641.7L239.3 634.3ZM231.2 631.8h1.400v16.400h-1.400zM223.7 639.3h16.400v1.400h-16.400zM259.6 634.1L254.4 640.2L251.7 633.1ZM244.4 631.5h1.400v16.400h-1.400zM236.9 639.0h16.400v1.400h-16.400zM274.7 640.0L267.4 643.2L268.0 635.6ZM258.5 630.6h1.400v16.400h-1.400zM251.0 638.1h16.400v1.400h-16.400zM287.7 640.4L280.4 643.8L280.9 636.2ZM271.5 631.3h1.400v16.400h-1.400zM264.0 638.8h16.400v1.400h-16.400zM301.2 640.4L294.1 644.1L294.2 636.5ZM285.0 631.9h1.400v16.400h-1.400zM277.5 639.4h16.400v1.400h-16.400zM314.9 640.6L307.4 643.2L308.6 635.7ZM298.9 630.0h1.400v16.400h-1.400zM291.4 637.5h16.400v1.400h-16.400zM328.1 635.5L322.5 641.2L320.2 634.0ZM312.6 631.9h1.400v16.400h-1.400zM305.1 639.4h16.400v1.400h-16.400zM342.4 642.8L334.7 644.4L336.8 637.1ZM326.9 630.2h1.400v16.400h-1.400zM319.4 637.7h16.400v1.400h-16.400zM355.9 640.8L348.4 643.3L349.7 635.9ZM339.9 630.0h1.400v16.400h-1.400zM332.4 637.5h16.400v1.400h-16.400zM370.4 634.2L365.2 640.2L362.6 633.0ZM355.2 631.3h1.400v16.400h-1.400zM347.7 638.8h16.400v1.400h-16.400zM384.5 635.3L378.9 640.9L376.7 633.7ZM369.0 631.5h1.400v16.400h-1.400zM361.5 639.0h16.400v1.400h-16.400zM397.6 639.3L390.6 643.2L390.5 635.6ZM381.4 631.2h1.400v16.400h-1.400zM373.9 638.7h16.400v1.400h-16.400zM412.0 639.9L405.0 643.7L405.0 636.1ZM395.8 631.7h1.400v16.400h-1.400zM388.3 639.2h16.400v1.400h-16.400zM68.4 651.1L62.1 656.0L60.9 648.5ZM52.4 645.5h1.400v16.400h-1.400zM44.9 653.0h16.400v1.400h-16.400zM80.1 649.2L74.5 654.8L72.3 647.5ZM64.6 645.4h1.400v16.400h-1.400zM57.1 652.9h16.400v1.400h-16.400zM96.4 652.7L89.7 657.0L89.1 649.4ZM80.2 645.6h1.400v16.400h-1.400zM72.7 653.1h16.400v1.400h-16.400zM107.8 647.9L102.1 653.5L100.0 646.2ZM92.2 644.0h1.400v16.400h-1.400zM84.7 651.5h16.400v1.400h-16.400zM122.2 652.9L114.9 656.2L115.5 648.6ZM106.0 643.6h1.400v16.400h-1.400zM98.5 651.1h16.400v1.400h-16.400zM137.0 657.7L129.2 659.5L131.3 652.2ZM121.4 645.3h1.400v16.400h-1.400zM113.9 652.8h16.400v1.400h-16.400zM150.4 649.4L144.6 654.9L142.6 647.6ZM134.7 645.3h1.400v16.400h-1.400zM127.2 652.8h16.400v1.400h-16.400zM164.7 653.2L157.5 656.6L157.9 649.0ZM148.5 644.1h1.400v16.400h-1.400zM141.0 651.6h16.400v1.400h-16.400zM177.0 654.8L169.4 657.2L170.9 649.8ZM161.1 643.7h1.400v16.400h-1.400zM153.6 651.2h16.400v1.400h-16.400zM192.0 648.2L186.2 653.7L184.3 646.3ZM176.3 644.0h1.400v16.400h-1.400zM168.8 651.5h16.400v1.400h-16.400zM204.9 656.5L197.2 658.4L199.0 651.1ZM189.2 644.4h1.400v16.400h-1.400zM181.7 651.9h16.400v1.400h-16.400zM217.6 657.4L209.8 658.7L212.3 651.5ZM202.3 644.1h1.400v16.400h-1.400zM194.8 651.6h16.400v1.400h-16.400zM232.8 652.0L226.1 656.3L225.5 648.8ZM216.7 645.1h1.400v16.400h-1.400zM209.2 652.6h16.400v1.400h-16.400zM246.8 651.5L240.0 655.7L239.6 648.1ZM230.6 644.2h1.400v16.400h-1.400zM223.1 651.7h16.400v1.400h-16.400zM261.4 656.8L253.7 658.7L255.6 651.3ZM245.7 644.6h1.400v16.400h-1.400zM238.2 652.1h16.400v1.400h-16.400zM275.5 653.4L268.4 657.0L268.5 649.4ZM259.3 644.9h1.400v16.400h-1.400zM251.8 652.4h16.400v1.400h-16.400zM287.4 651.4L280.7 655.7L280.1 648.1ZM271.2 644.4h1.400v16.400h-1.400zM263.7 651.9h16.400v1.400h-16.400zM301.2 658.6L293.4 659.8L295.9 652.6ZM285.9 645.2h1.400v16.400h-1.400zM278.4 652.7h16.400v1.400h-16.400zM315.3 656.5L307.7 658.8L309.3 651.3ZM299.5 645.1h1.400v16.400h-1.400zM292.0 652.6h16.400v1.400h-16.400zM329.8 650.3L323.3 654.9L322.4 647.4ZM313.7 644.0h1.400v16.400h-1.400zM306.2 651.5h16.400v1.400h-16.400zM344.1 648.8L338.0 653.9L336.5 646.5ZM328.2 643.7h1.400v16.400h-1.400zM320.7 651.2h16.400v1.400h-16.400zM358.0 650.1L351.5 654.8L350.5 647.2ZM341.9 643.9h1.400v16.400h-1.400zM334.4 651.4h16.400v1.400h-16.400zM370.1 651.4L363.2 655.5L362.9 647.9ZM353.9 643.9h1.400v16.400h-1.400zM346.4 651.4h16.400v1.400h-16.400zM384.5 659.4L376.6 660.5L379.3 653.4ZM369.3 645.7h1.400v16.400h-1.400zM361.8 653.2h16.400v1.400h-16.400zM397.2 656.4L389.5 658.4L391.3 651.1ZM381.4 644.6h1.400v16.400h-1.400zM373.9 652.1h16.400v1.400h-16.400zM411.7 658.3L403.9 659.7L406.3 652.5ZM396.3 645.3h1.400v16.400h-1.400zM388.8 652.8h16.400v1.400h-16.400zM108.4 669.5L100.7 671.5L102.5 664.1ZM92.6 657.6h1.400v16.400h-1.400zM85.1 665.1h16.400v1.400h-16.400zM123.0 670.5L115.2 672.3L117.2 665.0ZM107.3 658.2h1.400v16.400h-1.400zM99.8 665.7h16.400v1.400h-16.400zM135.1 661.5L129.8 667.4L127.3 660.3ZM119.8 658.5h1.400v16.400h-1.400zM112.3 666.0h16.400v1.400h-16.400zM149.8 667.2L142.7 670.9L142.8 663.3ZM133.6 658.8h1.400v16.400h-1.400zM126.1 666.3h16.400v1.400h-16.400zM164.0 672.4L156.1 673.5L158.7 666.4ZM148.7 658.8h1.400v16.400h-1.400zM141.2 666.3h16.400v1.400h-16.400zM177.7 671.2L169.8 672.5L172.3 665.3ZM162.3 657.9h1.400v16.400h-1.400zM154.8 665.4h16.400v1.400h-16.400zM191.6 663.2L185.4 668.3L184.0 660.8ZM175.6 658.0h1.400v16.400h-1.400zM168.1 665.5h16.400v1.400h-16.400zM206.7 664.6L199.9 668.8L199.5 661.2ZM190.5 657.3h1.400v16.400h-1.400zM183.0 664.8h16.400v1.400h-16.400zM220.4 666.9L213.1 670.0L213.8 662.4ZM204.3 657.2h1.400v16.400h-1.400zM196.8 664.7h16.400v1.400h-16.400zM232.7 664.3L226.1 668.8L225.4 661.2ZM216.6 657.7h1.400v16.400h-1.400zM209.1 665.2h16.400v1.400h-16.400zM248.1 666.8L241.0 670.4L241.2 662.8ZM231.9 658.2h1.400v16.400h-1.400zM224.4 665.7h16.400v1.400h-16.400zM259.9 662.2L254.5 668.1L252.1 660.9ZM244.6 659.0h1.400v16.400h-1.400zM237.1 666.5h16.400v1.400h-16.400zM274.2 665.5L267.4 669.7L267.0 662.1ZM258.0 658.1h1.400v16.400h-1.400zM250.5 665.6h16.400v1.400h-16.400zM288.7 667.0L281.7 670.8L281.7 663.2ZM272.5 658.8h1.400v16.400h-1.400zM265.0 666.3h16.400v1.400h-16.400zM301.9 661.1L296.8 667.2L294.0 660.1ZM286.8 658.5h1.400v16.400h-1.400zM279.3 666.0h16.400v1.400h-16.400zM315.3 661.8L309.6 667.4L307.5 660.0ZM299.7 657.8h1.400v16.400h-1.400zM292.2 665.3h16.400v1.400h-16.400zM328.2 672.6L320.4 673.7L323.0 666.6ZM313.0 659.0h1.400v16.400h-1.400zM305.5 666.5h16.400v1.400h-16.400zM343.8 670.2L336.2 672.4L337.8 665.0ZM327.9 658.7h1.400v16.400h-1.400zM320.4 666.2h16.400v1.400h-16.400zM356.0 671.4L348.1 672.7L350.6 665.5ZM340.7 658.1h1.400v16.400h-1.400zM333.2 665.6h16.400v1.400h-16.400zM371.9 668.2L364.5 671.2L365.3 663.7ZM355.8 658.4h1.400v16.400h-1.400zM348.3 665.9h16.400v1.400h-16.400zM383.9 670.0L376.2 672.0L378.0 664.6ZM368.1 658.1h1.400v16.400h-1.400zM360.6 665.6h16.400v1.400h-16.400zM399.1 670.3L391.3 671.9L393.6 664.7ZM383.6 657.6h1.400v16.400h-1.400zM376.1 665.1h16.400v1.400h-16.400zM411.4 670.5L403.6 672.1L405.8 664.8ZM395.9 657.8h1.400v16.400h-1.400zM388.4 665.3h16.400v1.400h-16.400zM67.4 675.3L62.1 681.3L59.5 674.2ZM52.1 672.6h1.400v16.400h-1.400zM44.6 680.1h16.400v1.400h-16.400zM80.9 680.9L73.5 683.9L74.3 676.4ZM64.7 671.0h1.400v16.400h-1.400zM57.2 678.5h16.400v1.400h-16.400zM94.7 676.8L88.5 681.8L87.1 674.4ZM78.8 671.4h1.400v16.400h-1.400zM71.3 678.9h16.400v1.400h-16.400zM109.2 681.4L101.8 684.2L102.8 676.7ZM93.2 671.1h1.400v16.400h-1.400zM85.7 678.6h16.400v1.400h-16.400zM122.5 676.6L116.3 681.6L115.0 674.1ZM106.5 671.1h1.400v16.400h-1.400zM99.0 678.6h16.400v1.400h-16.400zM138.0 681.0L130.8 684.6L131.1 677.0ZM121.8 672.3h1.400v16.400h-1.400zM114.3 679.8h16.400v1.400h-16.400zM149.0 686.0L141.2 687.3L143.6 680.1ZM133.6 672.8h1.400v16.400h-1.400zM126.1 680.3h16.400v1.400h-16.400zM163.6 681.2L156.3 684.3L157.0 676.8ZM147.5 671.5h1.400v16.400h-1.400zM140.0 679.0h16.400v1.400h-16.400zM179.1 677.7L173.0 682.8L171.5 675.3ZM163.2 672.4h1.400v16.400h-1.400zM155.7 679.9h16.400v1.400h-16.400zM192.6 680.1L185.6 683.8L185.7 676.2ZM176.4 671.7h1.400v16.400h-1.400zM168.9 679.2h16.400v1.400h-16.400zM205.3 679.5L198.5 683.7L198.1 676.1ZM189.1 672.1h1.400v16.400h-1.400zM181.6 679.6h16.400v1.400h-16.400zM218.0 684.6L210.1 685.8L212.7 678.7ZM202.7 671.2h1.400v16.400h-1.400zM195.2 678.7h16.400v1.400h-16.400zM233.1 676.5L226.8 681.3L225.6 673.8ZM217.1 670.8h1.400v16.400h-1.400zM209.6 678.3h16.400v1.400h-16.400zM247.0 678.3L240.6 683.1L239.5 675.6ZM230.9 672.4h1.400v16.400h-1.400zM223.4 679.9h16.400v1.400h-16.400zM261.5 681.8L254.1 684.7L255.0 677.2ZM245.4 671.8h1.400v16.400h-1.400zM237.9 679.3h16.400v1.400h-16.400zM274.6 675.5L269.0 681.1L266.8 673.8ZM259.1 671.7h1.400v16.400h-1.400zM251.6 679.2h16.400v1.400h-16.400zM287.9 681.3L280.7 684.6L281.2 677.1ZM271.8 672.0h1.400v16.400h-1.400zM264.3 679.5h16.400v1.400h-16.400zM301.4 685.8L293.5 687.0L296.1 679.9ZM286.2 672.3h1.400v16.400h-1.400zM278.7 679.8h16.400v1.400h-16.400zM317.3 680.0L310.2 683.7L310.3 676.1ZM301.1 671.6h1.400v16.400h-1.400zM293.6 679.1h16.400v1.400h-16.400zM330.1 677.8L323.9 682.8L322.5 675.3ZM314.1 672.3h1.400v16.400h-1.400zM306.6 679.8h16.400v1.400h-16.400zM343.8 679.0L336.9 683.0L336.7 675.4ZM327.6 671.2h1.400v16.400h-1.400zM320.1 678.7h16.400v1.400h-16.400zM358.3 681.2L351.2 684.9L351.4 677.3ZM342.1 672.6h1.400v16.400h-1.400zM334.6 680.1h16.400v1.400h-16.400zM371.6 676.3L365.9 681.8L363.9 674.5ZM356.0 672.2h1.400v16.400h-1.400zM348.5 679.7h16.400v1.400h-16.400zM385.5 676.0L379.9 681.6L377.7 674.3ZM370.0 672.2h1.400v16.400h-1.400zM362.5 679.7h16.400v1.400h-16.400zM398.9 675.6L393.2 681.2L391.1 673.9ZM383.3 671.7h1.400v16.400h-1.400zM375.8 679.2h16.400v1.400h-16.400z" fill="#c4c408"/>
<path d="M49.3 339.2L39.8 339.1M49.5 354.2L40.0 354.8M49.9 366.7L40.4 366.6M49.8 379.8L40.3 379.3M49.3 395.1L39.8 393.6M50.1 408.1L40.6 409.7M48.9 421.4L39.4 424.9M48.8 434.5L39.3 436.4M50.6 448.9L41.1 450.6M48.7 463.1L39.2 465.4M50.3 477.0L40.8 476.3M49.3 490.6L39.8 493.2M48.6 502.7L39.1 503.7M49.3 516.2L39.8 517.8M48.6 530.2L39.1 532.1M49.1 543.5L39.6 544.6M50.3 557.1L40.8 557.2M49.1 570.5L39.6 570.1M50.5 585.8L41.0 585.3M48.6 598.3L39.1 599.6M50.3 612.1L40.8 612.6M50.3 626.2L40.8 628.0M49.6 639.1L40.1 637.1M50.1 653.7L40.6 654.0M49.8 680.8L40.3 684.4" stroke="#c4c408" stroke-width="1.200" fill="none"/>
<g fill="#c4c408">
<circle cx="52.3" cy="339.2" r="6.200"/>
<circle cx="66.6" cy="339.1" r="6.200"/>
<circle cx="79.9" cy="339.7" r="6.200"/>
<circle cx="92.4" cy="340.0" r="6.200"/>
<circle cx="105.9" cy="339.9" r="6.200"/>
<circle cx="119.5" cy="339.1" r="6.200"/>
<circle cx="133.8" cy="340.7" r="6.200"/>
<circle cx="146.7" cy="339.4" r="6.200"/>
<circle cx="161.4" cy="341.0" r="6.200"/>
<circle cx="174.8" cy="339.8" r="6.200"/>
<circle cx="189.3" cy="339.0" r="6.200"/>
<circle cx="202.6" cy="339.5" r="6.200"/>
<circle cx="214.5" cy="339.2" r="6.200"/>
<circle cx="228.5" cy="340.7" r="6.200"/>
<circle cx="241.7" cy="340.2" r="6.200"/>
<circle cx="256.3" cy="339.7" r="6.200"/>
<circle cx="269.6" cy="339.0" r="6.200"/>
<circle cx="282.1" cy="339.4" r="6.200"/>
<circle cx="297.0" cy="339.8" r="6.200"/>
<circle cx="309.8" cy="340.2" r="6.200"/>
<circle cx="323.6" cy="339.6" r="6.200"/>
<circle cx="337.9" cy="340.4" r="6.200"/>
<circle cx="350.3" cy="340.2" r="6.200"/>
<circle cx="364.5" cy="340.8" r="6.200"/>
<circle cx="378.5" cy="339.5" r="6.200"/>
<circle cx="392.6" cy="339.2" r="6.200"/>
<circle cx="52.5" cy="354.2" r="6.200"/>
<circle cx="65.5" cy="353.6" r="6.200"/>
<circle cx="78.8" cy="354.0" r="6.200"/>
<circle cx="94.0" cy="353.8" r="6.200"/>
<circle cx="107.8" cy="353.2" r="6.200"/>
<circle cx="120.9" cy="353.8" r="6.200"/>
<circle cx="134.2" cy="353.5" r="6.200"/>
<circle cx="148.4" cy="354.6" r="6.200"/>
<circle cx="161.1" cy="354.0" r="6.200"/>
<circle cx="173.8" cy="354.0" r="6.200"/>
<circle cx="188.6" cy="354.7" r="6.200"/>
<circle cx="202.6" cy="353.1" r="6.200"/>
<circle cx="215.2" cy="354.0" r="6.200"/>
<circle cx="227.9" cy="353.5" r="6.200"/>
<circle cx="241.8" cy="352.8" r="6.200"/>
<circle cx="255.1" cy="354.2" r="6.200"/>
<circle cx="268.9" cy="353.0" r="6.200"/>
<circle cx="283.0" cy="354.4" r="6.200"/>
<circle cx="295.9" cy="353.5" r="6.200"/>
<circle cx="310.5" cy="354.4" r="6.200"/>
<circle cx="324.6" cy="354.4" r="6.200"/>
<circle cx="337.0" cy="353.4" r="6.200"/>
<circle cx="350.7" cy="354.4" r="6.200"/>
<circle cx="365.6" cy="352.8" r="6.200"/>
<circle cx="377.5" cy="353.0" r="6.200"/>
<circle cx="391.2" cy="353.6" r="6.200"/>
<circle cx="52.9" cy="366.7" r="6.200"/>
<circle cx="65.2" cy="367.0" r="6.200"/>
<circle cx="79.5" cy="367.3" r="6.200"/>
<circle cx="94.4" cy="367.6" r="6.200"/>
<circle cx="107.0" cy="367.5" r="6.200"/>
<circle cx="120.9" cy="366.2" r="6.200"/>
<circle cx="135.0" cy="367.8" r="6.200"/>
<circle cx="148.5" cy="367.9" r="6.200"/>
<circle cx="161.0" cy="367.0" r="6.200"/>
<circle cx="174.0" cy="367.5" r="6.200"/>
<circle cx="187.4" cy="366.2" r="6.200"/>
<circle cx="201.3" cy="366.5" r="6.200"/>
<circle cx="215.2" cy="366.2" r="6.200"/>
<circle cx="228.0" cy="366.4" r="6.200"/>
<circle cx="241.8" cy="366.9" r="6.200"/>
<circle cx="255.2" cy="368.0" r="6.200"/>
<circle cx="270.1" cy="366.4" r="6.200"/>
<circle cx="282.9" cy="366.9" r="6.200"/>
<circle cx="296.7" cy="366.4" r="6.200"/>
<circle cx="311.3" cy="368.3" r="6.200"/>
<circle cx="324.0" cy="367.2" r="6.200"/>
<circle cx="336.8" cy="366.3" r="6.200"/>
<circle cx="350.9" cy="366.7" r="6.200"/>
<circle cx="365.6" cy="366.5" r="6.200"/>
<circle cx="377.4" cy="368.2" r="6.200"/>
<circle cx="392.0" cy="366.4" r="6.200"/>
<circle cx="52.8" cy="379.8" r="6.200"/>
<circle cx="66.3" cy="381.9" r="6.200"/>
<circle cx="80.6" cy="381.2" r="6.200"/>
<circle cx="92.9" cy="380.5" r="6.200"/>
<circle cx="106.3" cy="381.4" r="6.200"/>
<circle cx="120.6" cy="381.4" r="6.200"/>
<circle cx="133.8" cy="380.2" r="6.200"/>
<circle cx="148.4" cy="381.9" r="6.200"/>
<circle cx="162.1" cy="381.5" r="6.200"/>
<circle cx="175.6" cy="381.3" r="6.200"/>
<circle cx="187.9" cy="380.8" r="6.200"/>
<circle cx="201.8" cy="379.8" r="6.200"/>
<circle cx="214.6" cy="380.3" r="6.200"/>
<circle cx="228.7" cy="381.2" r="6.200"/>
<circle cx="243.8" cy="380.7" r="6.200"/>
<circle cx="257.4" cy="381.9" r="6.200"/>
<circle cx="271.0" cy="380.5" r="6.200"/>
<circle cx="282.9" cy="380.2" r="6.200"/>
<circle cx="296.5" cy="380.1" r="6.200"/>
<circle cx="311.0" cy="381.7" r="6.200"/>
<circle cx="325.1" cy="380.8" r="6.200"/>
<circle cx="338.2" cy="381.5" r="6.200"/>
<circle cx="350.6" cy="381.2" r="6.200"/>
<circle cx="366.0" cy="381.4" r="6.200"/>
<circle cx="379.2" cy="380.8" r="6.200"/>
<circle cx="391.5" cy="381.4" r="6.200"/>
<circle cx="52.3" cy="395.1" r="6.200"/>
<circle cx="67.3" cy="394.2" r="6.200"/>
<circle cx="79.6" cy="395.4" r="6.200"/>
<circle cx="93.9" cy="393.7" r="6.200"/>
<circle cx="106.2" cy="393.6" r="6.200"/>
<circle cx="121.5" cy="395.1" r="6.200"/>
<circle cx="133.4" cy="395.1" r="6.200"/>
<circle cx="148.9" cy="394.7" r="6.200"/>
<circle cx="161.1" cy="394.5" r="6.200"/>
<circle cx="174.2" cy="393.3" r="6.200"/>
<circle cx="189.6" cy="394.7" r="6.200"/>
<circle cx="202.2" cy="395.4" r="6.200"/>
<circle cx="215.6" cy="395.2" r="6.200"/>
<circle cx="230.1" cy="393.8" r="6.200"/>
<circle cx="242.4" cy="393.9" r="6.200"/>
<circle cx="256.0" cy="394.6" r="6.200"/>
<circle cx="269.6" cy="394.2" r="6.200"/>
<circle cx="282.9" cy="395.3" r="6.200"/>
<circle cx="297.0" cy="394.3" r="6.200"/>
<circle cx="311.1" cy="395.3" r="6.200"/>
<circle cx="324.3" cy="395.3" r="6.200"/>
<circle cx="338.1" cy="394.5" r="6.200"/>
<circle cx="351.7" cy="393.3" r="6.200"/>
<circle cx="365.1" cy="393.7" r="6.200"/>
<circle cx="377.8" cy="395.1" r="6.200"/>
<circle cx="391.7" cy="394.3" r="6.200"/>
<circle cx="53.1" cy="408.1" r="6.200"/>
<circle cx="65.9" cy="408.0" r="6.200"/>
<circle cx="80.0" cy="408.6" r="6.200"/>
<circle cx="92.6" cy="408.1" r="6.200"/>
<circle cx="106.5" cy="407.5" r="6.200"/>
<circle cx="121.3" cy="408.0" r="6.200"/>
<circle cx="134.4" cy="408.6" r="6.200"/>
<circle cx="148.8" cy="407.9" r="6.200"/>
<circle cx="161.7" cy="408.0" r="6.200"/>
<circle cx="175.1" cy="408.4" r="6.200"/>
<circle cx="188.6" cy="408.1" r="6.200"/>
<circle cx="202.2" cy="409.0" r="6.200"/>
<circle cx="216.3" cy="408.8" r="6.200"/>
<circle cx="230.4" cy="407.5" r="6.200"/>
<circle cx="243.2" cy="409.0" r="6.200"/>
<circle cx="257.4" cy="407.2" r="6.200"/>
<circle cx="269.4" cy="407.9" r="6.200"/>
<circle cx="282.9" cy="407.4" r="6.200"/>
<circle cx="296.5" cy="408.4" r="6.200"/>
<circle cx="311.7" cy="408.9" r="6.200"/>
<circle cx="323.9" cy="408.5" r="6.200"/>
<circle cx="338.6" cy="407.2" r="6.200"/>
<circle cx="352.7" cy="409.0" r="6.200"/>
<circle cx="364.9" cy="409.0" r="6.200"/>
<circle cx="378.9" cy="408.0" r="6.200"/>
<circle cx="393.8" cy="408.7" r="6.200"/>
<circle cx="51.9" cy="421.4" r="6.200"/>
<circle cx="66.3" cy="421.2" r="6.200"/>
<circle cx="79.2" cy="421.2" r="6.200"/>
<circle cx="94.0" cy="420.5" r="6.200"/>
<circle cx="107.2" cy="421.5" r="6.200"/>
<circle cx="119.6" cy="421.2" r="6.200"/>
<circle cx="134.6" cy="421.6" r="6.200"/>
<circle cx="147.0" cy="422.7" r="6.200"/>
<circle cx="162.2" cy="422.6" r="6.200"/>
<circle cx="174.3" cy="421.1" r="6.200"/>
<circle cx="187.7" cy="422.2" r="6.200"/>
<circle cx="201.9" cy="420.8" r="6.200"/>
<circle cx="215.8" cy="422.5" r="6.200"/>
<circle cx="230.3" cy="421.1" r="6.200"/>
<circle cx="242.4" cy="422.5" r="6.200"/>
<circle cx="257.0" cy="422.0" r="6.200"/>
<circle cx="269.5" cy="420.6" r="6.200"/>
<circle cx="284.5" cy="421.4" r="6.200"/>
<circle cx="296.7" cy="422.6" r="6.200"/>
<circle cx="311.6" cy="422.3" r="6.200"/>
<circle cx="324.0" cy="422.4" r="6.200"/>
<circle cx="337.5" cy="422.4" r="6.200"/>
<circle cx="352.0" cy="421.2" r="6.200"/>
<circle cx="365.8" cy="422.5" r="6.200"/>
<circle cx="378.8" cy="420.8" r="6.200"/>
<circle cx="393.0" cy="421.0" r="6.200"/>
<circle cx="51.8" cy="434.5" r="6.200"/>
<circle cx="65.2" cy="434.5" r="6.200"/>
<circle cx="79.4" cy="434.8" r="6.200"/>
<circle cx="94.1" cy="434.7" r="6.200"/>
<circle cx="107.1" cy="434.5" r="6.200"/>
<circle cx="120.4" cy="434.1" r="6.200"/>
<circle cx="133.8" cy="434.1" r="6.200"/>
<circle cx="148.5" cy="435.3" r="6.200"/>
<circle cx="160.9" cy="435.1" r="6.200"/>
<circle cx="176.2" cy="434.3" r="6.200"/>
<circle cx="189.5" cy="435.1" r="6.200"/>
<circle cx="202.5" cy="435.9" r="6.200"/>
<circle cx="215.9" cy="435.2" r="6.200"/>
<circle cx="230.1" cy="436.3" r="6.200"/>
<circle cx="243.0" cy="435.9" r="6.200"/>
<circle cx="257.4" cy="435.5" r="6.200"/>
<circle cx="270.4" cy="434.9" r="6.200"/>
<circle cx="283.2" cy="434.4" r="6.200"/>
<circle cx="296.9" cy="435.7" r="6.200"/>
<circle cx="310.9" cy="434.5" r="6.200"/>
<circle cx="324.2" cy="436.0" r="6.200"/>
<circle cx="339.5" cy="435.6" r="6.200"/>
<circle cx="351.8" cy="434.6" r="6.200"/>
<circle cx="365.5" cy="435.1" r="6.200"/>
<circle cx="378.8" cy="435.1" r="6.200"/>
<circle cx="392.7" cy="436.2" r="6.200"/>
<circle cx="53.6" cy="448.9" r="6.200"/>
<circle cx="65.7" cy="449.8" r="6.200"/>
<circle cx="79.5" cy="448.5" r="6.200"/>
<circle cx="92.4" cy="448.5" r="6.200"/>
<circle cx="107.1" cy="448.8" r="6.200"/>
<circle cx="120.1" cy="448.8" r="6.200"/>
<circle cx="133.3" cy="448.3" r="6.200"/>
<circle cx="147.1" cy="448.6" r="6.200"/>
<circle cx="160.7" cy="447.7" r="6.200"/>
<circle cx="174.9" cy="448.2" r="6.200"/>
<circle cx="189.1" cy="448.9" r="6.200"/>
<circle cx="203.1" cy="449.1" r="6.200"/>
<circle cx="216.7" cy="449.6" r="6.200"/>
<circle cx="229.6" cy="448.4" r="6.200"/>
<circle cx="244.5" cy="448.0" r="6.200"/>
<circle cx="257.6" cy="449.1" r="6.200"/>
<circle cx="269.7" cy="449.5" r="6.200"/>
<circle cx="285.2" cy="449.1" r="6.200"/>
<circle cx="298.5" cy="449.5" r="6.200"/>
<circle cx="310.8" cy="448.9" r="6.200"/>
<circle cx="325.3" cy="449.5" r="6.200"/>
<circle cx="339.6" cy="449.5" r="6.200"/>
<circle cx="352.7" cy="449.7" r="6.200"/>
<circle cx="366.6" cy="449.2" r="6.200"/>
<circle cx="379.2" cy="447.8" r="6.200"/>
<circle cx="392.6" cy="448.5" r="6.200"/>
<circle cx="51.7" cy="463.1" r="6.200"/>
<circle cx="66.4" cy="462.7" r="6.200"/>
<circle cx="80.2" cy="462.8" r="6.200"/>
<circle cx="93.5" cy="461.3" r="6.200"/>
<circle cx="107.8" cy="462.9" r="6.200"/>
<circle cx="120.8" cy="462.5" r="6.200"/>
<circle cx="134.8" cy="461.4" r="6.200"/>
<circle cx="148.6" cy="461.9" r="6.200"/>
<circle cx="160.8" cy="461.9" r="6.200"/>
<circle cx="175.9" cy="461.8" r="6.200"/>
<circle cx="189.5" cy="463.4" r="6.200"/>
<circle cx="202.6" cy="462.1" r="6.200"/>
<circle cx="216.3" cy="462.8" r="6.200"/>
<circle cx="230.5" cy="462.7" r="6.200"/>
<circle cx="243.9" cy="461.5" r="6.200"/>
<circle cx="256.5" cy="461.9" r="6.200"/>
<circle cx="271.4" cy="462.0" r="6.200"/>
<circle cx="284.7" cy="461.3" r="6.200"/>
<circle cx="297.2" cy="461.9" r="6.200"/>
<circle cx="312.2" cy="462.8" r="6.200"/>
<circle cx="325.8" cy="461.9" r="6.200"/>
<circle cx="339.1" cy="462.3" r="6.200"/>
<circle cx="352.7" cy="461.6" r="6.200"/>
<circle cx="367.2" cy="461.7" r="6.200"/>
<circle cx="381.1" cy="463.4" r="6.200"/>
<circle cx="392.6" cy="462.3" r="6.200"/>
<circle cx="53.3" cy="477.0" r="6.200"/>
<circle cx="66.1" cy="475.5" r="6.200"/>
<circle cx="79.2" cy="477.0" r="6.200"/>
<circle cx="92.9" cy="476.2" r="6.200"/>
<circle cx="106.4" cy="476.1" r="6.200"/>
<circle cx="121.8" cy="475.2" r="6.200"/>
<circle cx="135.2" cy="476.0" r="6.200"/>
<circle cx="149.0" cy="476.4" r="6.200"/>
<circle cx="161.2" cy="476.9" r="6.200"/>
<circle cx="175.4" cy="475.0" r="6.200"/>
<circle cx="188.0" cy="476.0" r="6.200"/>
<circle cx="202.7" cy="475.6" r="6.200"/>
<circle cx="215.6" cy="475.7" r="6.200"/>
<circle cx="229.7" cy="476.7" r="6.200"/>
<circle cx="242.6" cy="476.6" r="6.200"/>
<circle cx="258.1" cy="475.2" r="6.200"/>
<circle cx="272.0" cy="476.5" r="6.200"/>
<circle cx="285.6" cy="475.5" r="6.200"/>
<circle cx="298.0" cy="475.8" r="6.200"/>
<circle cx="313.1" cy="476.2" r="6.200"/>
<circle cx="325.3" cy="475.8" r="6.200"/>
<circle cx="338.8" cy="475.0" r="6.200"/>
<circle cx="352.1" cy="476.7" r="6.200"/>
<circle cx="366.1" cy="477.0" r="6.200"/>
<circle cx="379.7" cy="475.5" r="6.200"/>
<circle cx="393.9" cy="475.3" r="6.200"/>
<circle cx="52.3" cy="490.6" r="6.200"/>
<circle cx="67.1" cy="490.3" r="6.200"/>
<circle cx="80.2" cy="490.5" r="6.200"/>
<circle cx="94.5" cy="489.7" r="6.200"/>
<circle cx="107.7" cy="488.6" r="6.200"/>
<circle cx="121.4" cy="489.5" r="6.200"/>
<circle cx="135.1" cy="489.9" r="6.200"/>
<circle cx="147.7" cy="488.6" r="6.200"/>
<circle cx="162.8" cy="488.8" r="6.200"/>
<circle cx="175.5" cy="489.3" r="6.200"/>
<circle cx="188.8" cy="490.1" r="6.200"/>
<circle cx="203.9" cy="489.1" r="6.200"/>
<circle cx="216.9" cy="489.2" r="6.200"/>
<circle cx="230.3" cy="489.4" r="6.200"/>
<circle cx="243.1" cy="488.9" r="6.200"/>
<circle cx="256.9" cy="490.5" r="6.200"/>
<circle cx="271.2" cy="489.0" r="6.200"/>
<circle cx="285.7" cy="490.7" r="6.200"/>
<circle cx="298.4" cy="488.8" r="6.200"/>
<circle cx="311.5" cy="488.7" r="6.200"/>
<circle cx="325.5" cy="488.7" r="6.200"/>
<circle cx="338.9" cy="489.1" r="6.200"/>
<circle cx="353.3" cy="490.5" r="6.200"/>
<circle cx="367.4" cy="489.4" r="6.200"/>
<circle cx="380.3" cy="489.7" r="6.200"/>
<circle cx="393.9" cy="489.2" r="6.200"/>
<circle cx="51.6" cy="502.7" r="6.200"/>
<circle cx="67.3" cy="502.4" r="6.200"/>
<circle cx="79.9" cy="503.5" r="6.200"/>
<circle cx="94.4" cy="502.6" r="6.200"/>
<circle cx="106.7" cy="502.6" r="6.200"/>
<circle cx="120.7" cy="503.1" r="6.200"/>
<circle cx="135.6" cy="504.0" r="6.200"/>
<circle cx="149.1" cy="502.1" r="6.200"/>
<circle cx="160.9" cy="503.7" r="6.200"/>
<circle cx="176.5" cy="503.1" r="6.200"/>
<circle cx="189.5" cy="502.1" r="6.200"/>
<circle cx="202.7" cy="504.1" r="6.200"/>
<circle cx="217.3" cy="504.0" r="6.200"/>
<circle cx="231.3" cy="502.6" r="6.200"/>
<circle cx="243.1" cy="502.4" r="6.200"/>
<circle cx="257.7" cy="503.6" r="6.200"/>
<circle cx="272.3" cy="503.7" r="6.200"/>
<circle cx="285.3" cy="503.8" r="6.200"/>
<circle cx="298.6" cy="503.3" r="6.200"/>
<circle cx="311.3" cy="503.8" r="6.200"/>
<circle cx="325.4" cy="504.1" r="6.200"/>
<circle cx="340.0" cy="502.8" r="6.200"/>
<circle cx="352.5" cy="502.7" r="6.200"/>
<circle cx="367.3" cy="503.6" r="6.200"/>
<circle cx="379.9" cy="502.3" r="6.200"/>
<circle cx="394.4" cy="503.4" r="6.200"/>
<circle cx="52.3" cy="516.2" r="6.200"/>
<circle cx="66.4" cy="515.7" r="6.200"/>
<circle cx="79.5" cy="516.7" r="6.200"/>
<circle cx="94.6" cy="517.1" r="6.200"/>
<circle cx="108.1" cy="516.7" r="6.200"/>
<circle cx="120.4" cy="516.2" r="6.200"/>
<circle cx="135.7" cy="517.3" r="6.200"/>
<circle cx="147.9" cy="515.7" r="6.200"/>
<circle cx="162.0" cy="517.2" r="6.200"/>
<circle cx="175.5" cy="516.3" r="6.200"/>
<circle cx="189.7" cy="517.7" r="6.200"/>
<circle cx="202.5" cy="515.8" r="6.200"/>
<circle cx="216.4" cy="516.6" r="6.200"/>
<circle cx="230.8" cy="516.1" r="6.200"/>
<circle cx="244.8" cy="517.3" r="6.200"/>
<circle cx="257.8" cy="516.2" r="6.200"/>
<circle cx="272.5" cy="516.4" r="6.200"/>
<circle cx="285.9" cy="516.2" r="6.200"/>
<circle cx="298.2" cy="517.4" r="6.200"/>
<circle cx="312.1" cy="517.8" r="6.200"/>
<circle cx="326.2" cy="516.1" r="6.200"/>
<circle cx="339.3" cy="516.6" r="6.200"/>
<circle cx="353.9" cy="517.8" r="6.200"/>
<circle cx="366.5" cy="516.6" r="6.200"/>
<circle cx="380.3" cy="517.8" r="6.200"/>
<circle cx="393.8" cy="515.8" r="6.200"/>
<circle cx="51.6" cy="530.2" r="6.200"/>
<circle cx="67.1" cy="531.2" r="6.200"/>
<circle cx="80.4" cy="531.5" r="6.200"/>
<circle cx="94.6" cy="530.0" r="6.200"/>
<circle cx="106.6" cy="531.4" r="6.200"/>
<circle cx="121.5" cy="529.4" r="6.200"/>
<circle cx="135.1" cy="530.1" r="6.200"/>
<circle cx="148.1" cy="530.0" r="6.200"/>
<circle cx="161.3" cy="529.3" r="6.200"/>
<circle cx="175.3" cy="530.1" r="6.200"/>
<circle cx="190.5" cy="529.6" r="6.200"/>
<circle cx="204.2" cy="529.8" r="6.200"/>
<circle cx="216.5" cy="531.1" r="6.200"/>
<circle cx="231.3" cy="530.3" r="6.200"/>
<circle cx="243.2" cy="530.3" r="6.200"/>
<circle cx="257.6" cy="531.3" r="6.200"/>
<circle cx="270.9" cy="530.1" r="6.200"/>
<circle cx="286.2" cy="529.4" r="6.200"/>
<circle cx="298.8" cy="531.1" r="6.200"/>
<circle cx="313.3" cy="529.4" r="6.200"/>
<circle cx="325.4" cy="529.4" r="6.200"/>
<circle cx="341.0" cy="529.9" r="6.200"/>
<circle cx="354.3" cy="531.3" r="6.200"/>
<circle cx="367.1" cy="529.9" r="6.200"/>
<circle cx="382.2" cy="530.7" r="6.200"/>
<circle cx="394.3" cy="530.9" r="6.200"/>
<circle cx="52.1" cy="543.5" r="6.200"/>
<circle cx="65.1" cy="544.6" r="6.200"/>
<circle cx="80.8" cy="544.3" r="6.200"/>
<circle cx="94.6" cy="543.0" r="6.200"/>
<circle cx="106.7" cy="543.9" r="6.200"/>
<circle cx="122.0" cy="545.0" r="6.200"/>
<circle cx="134.5" cy="543.5" r="6.200"/>
<circle cx="148.3" cy="544.0" r="6.200"/>
<circle cx="163.1" cy="543.3" r="6.200"/>
<circle cx="176.5" cy="544.5" r="6.200"/>
<circle cx="190.3" cy="544.6" r="6.200"/>
<circle cx="203.5" cy="543.6" r="6.200"/>
<circle cx="216.6" cy="543.7" r="6.200"/>
<circle cx="231.3" cy="543.1" r="6.200"/>
<circle cx="243.7" cy="544.6" r="6.200"/>
<circle cx="257.5" cy="543.0" r="6.200"/>
<circle cx="270.7" cy="544.1" r="6.200"/>
<circle cx="285.1" cy="545.1" r="6.200"/>
<circle cx="300.0" cy="545.1" r="6.200"/>
<circle cx="312.4" cy="543.1" r="6.200"/>
<circle cx="325.7" cy="544.0" r="6.200"/>
<circle cx="340.7" cy="543.9" r="6.200"/>
<circle cx="353.4" cy="543.8" r="6.200"/>
<circle cx="368.0" cy="544.4" r="6.200"/>
<circle cx="381.9" cy="544.8" r="6.200"/>
<circle cx="395.5" cy="543.2" r="6.200"/>
<circle cx="53.3" cy="557.1" r="6.200"/>
<circle cx="66.4" cy="557.3" r="6.200"/>
<circle cx="80.5" cy="556.9" r="6.200"/>
<circle cx="93.1" cy="557.0" r="6.200"/>
<circle cx="106.6" cy="558.4" r="6.200"/>
<circle cx="121.2" cy="557.2" r="6.200"/>
<circle cx="134.6" cy="558.7" r="6.200"/>
<circle cx="148.5" cy="557.0" r="6.200"/>
<circle cx="162.9" cy="557.9" r="6.200"/>
<circle cx="177.0" cy="556.7" r="6.200"/>
<circle cx="189.6" cy="558.3" r="6.200"/>
<circle cx="204.1" cy="558.5" r="6.200"/>
<circle cx="216.1" cy="557.1" r="6.200"/>
<circle cx="229.9" cy="556.9" r="6.200"/>
<circle cx="245.5" cy="557.8" r="6.200"/>
<circle cx="259.2" cy="557.3" r="6.200"/>
<circle cx="272.7" cy="557.5" r="6.200"/>
<circle cx="285.1" cy="558.2" r="6.200"/>
<circle cx="300.3" cy="556.7" r="6.200"/>
<circle cx="313.3" cy="557.9" r="6.200"/>
<circle cx="326.2" cy="557.3" r="6.200"/>
<circle cx="339.7" cy="556.9" r="6.200"/>
<circle cx="353.7" cy="557.8" r="6.200"/>
<circle cx="368.2" cy="556.9" r="6.200"/>
<circle cx="380.6" cy="557.2" r="6.200"/>
<circle cx="395.7" cy="556.9" r="6.200"/>
<circle cx="52.1" cy="570.5" r="6.200"/>
<circle cx="66.9" cy="571.3" r="6.200"/>
<circle cx="79.0" cy="570.3" r="6.200"/>
<circle cx="93.4" cy="571.3" r="6.200"/>
<circle cx="107.7" cy="570.3" r="6.200"/>
<circle cx="120.4" cy="571.6" r="6.200"/>
<circle cx="134.6" cy="570.7" r="6.200"/>
<circle cx="148.1" cy="572.2" r="6.200"/>
<circle cx="161.9" cy="571.3" r="6.200"/>
<circle cx="175.7" cy="571.0" r="6.200"/>
<circle cx="190.5" cy="572.3" r="6.200"/>
<circle cx="203.2" cy="570.5" r="6.200"/>
<circle cx="217.7" cy="570.5" r="6.200"/>
<circle cx="229.8" cy="572.1" r="6.200"/>
<circle cx="244.5" cy="571.9" r="6.200"/>
<circle cx="258.1" cy="572.0" r="6.200"/>
<circle cx="272.0" cy="570.5" r="6.200"/>
<circle cx="284.7" cy="571.3" r="6.200"/>
<circle cx="299.8" cy="572.1" r="6.200"/>
<circle cx="312.3" cy="571.5" r="6.200"/>
<circle cx="326.7" cy="571.2" r="6.200"/>
<circle cx="339.9" cy="570.7" r="6.200"/>
<circle cx="354.5" cy="572.1" r="6.200"/>
<circle cx="367.3" cy="571.2" r="6.200"/>
<circle cx="382.5" cy="572.2" r="6.200"/>
<circle cx="394.9" cy="570.4" r="6.200"/>
<circle cx="53.5" cy="585.8" r="6.200"/>
<circle cx="66.2" cy="583.8" r="6.200"/>
<circle cx="80.9" cy="584.6" r="6.200"/>
<circle cx="94.6" cy="585.1" r="6.200"/>
<circle cx="108.1" cy="584.1" r="6.200"/>
<circle cx="121.8" cy="584.2" r="6.200"/>
<circle cx="134.7" cy="585.6" r="6.200"/>
<circle cx="149.3" cy="584.1" r="6.200"/>
<circle cx="161.7" cy="584.6" r="6.200"/>
<circle cx="176.1" cy="584.5" r="6.200"/>
<circle cx="189.0" cy="584.2" r="6.200"/>
<circle cx="204.0" cy="585.7" r="6.200"/>
<circle cx="216.3" cy="584.9" r="6.200"/>
<circle cx="231.6" cy="583.8" r="6.200"/>
<circle cx="245.5" cy="584.0" r="6.200"/>
<circle cx="258.7" cy="584.9" r="6.200"/>
<circle cx="272.5" cy="584.4" r="6.200"/>
<circle cx="285.8" cy="585.0" r="6.200"/>
<circle cx="299.5" cy="585.1" r="6.200"/>
<circle cx="313.3" cy="584.7" r="6.200"/>
<circle cx="326.1" cy="585.1" r="6.200"/>
<circle cx="340.9" cy="584.2" r="6.200"/>
<circle cx="355.2" cy="585.4" r="6.200"/>
<circle cx="368.3" cy="584.1" r="6.200"/>
<circle cx="382.0" cy="583.9" r="6.200"/>
<circle cx="395.0" cy="584.6" r="6.200"/>
<circle cx="51.6" cy="598.3" r="6.200"/>
<circle cx="66.2" cy="597.4" r="6.200"/>
<circle cx="80.3" cy="597.5" r="6.200"/>
<circle cx="94.2" cy="599.0" r="6.200"/>
<circle cx="107.5" cy="597.4" r="6.200"/>
<circle cx="121.2" cy="598.1" r="6.200"/>
<circle cx="135.9" cy="597.6" r="6.200"/>
<circle cx="149.5" cy="599.5" r="6.200"/>
<circle cx="162.9" cy="599.1" r="6.200"/>
<circle cx="175.5" cy="599.5" r="6.200"/>
<circle cx="189.9" cy="599.4" r="6.200"/>
<circle cx="204.6" cy="597.7" r="6.200"/>
<circle cx="218.0" cy="599.3" r="6.200"/>
<circle cx="230.2" cy="598.1" r="6.200"/>
<circle cx="245.4" cy="597.6" r="6.200"/>
<circle cx="259.5" cy="597.9" r="6.200"/>
<circle cx="273.1" cy="597.6" r="6.200"/>
<circle cx="286.1" cy="599.3" r="6.200"/>
<circle cx="299.2" cy="597.9" r="6.200"/>
<circle cx="313.6" cy="598.0" r="6.200"/>
<circle cx="326.3" cy="597.7" r="6.200"/>
<circle cx="340.3" cy="599.4" r="6.200"/>
<circle cx="355.2" cy="599.3" r="6.200"/>
<circle cx="367.8" cy="599.0" r="6.200"/>
<circle cx="381.5" cy="598.5" r="6.200"/>
<circle cx="396.4" cy="598.1" r="6.200"/>
<circle cx="53.3" cy="612.1" r="6.200"/>
<circle cx="66.4" cy="612.8" r="6.200"/>
<circle cx="79.1" cy="613.1" r="6.200"/>
<circle cx="94.0" cy="611.8" r="6.200"/>
<circle cx="108.1" cy="611.5" r="6.200"/>
<circle cx="122.3" cy="612.2" r="6.200"/>
<circle cx="134.7" cy="612.6" r="6.200"/>
<circle cx="148.6" cy="611.3" r="6.200"/>
<circle cx="163.0" cy="611.0" r="6.200"/>
<circle cx="176.9" cy="611.5" r="6.200"/>
<circle cx="190.3" cy="613.1" r="6.200"/>
<circle cx="203.9" cy="612.4" r="6.200"/>
<circle cx="217.1" cy="610.9" r="6.200"/>
<circle cx="230.2" cy="611.2" r="6.200"/>
<circle cx="245.3" cy="611.9" r="6.200"/>
<circle cx="258.8" cy="612.9" r="6.200"/>
<circle cx="271.7" cy="611.4" r="6.200"/>
<circle cx="286.6" cy="610.9" r="6.200"/>
<circle cx="298.9" cy="611.7" r="6.200"/>
<circle cx="312.9" cy="611.7" r="6.200"/>
<circle cx="326.9" cy="612.2" r="6.200"/>
<circle cx="341.5" cy="611.3" r="6.200"/>
<circle cx="355.3" cy="611.9" r="6.200"/>
<circle cx="368.0" cy="613.0" r="6.200"/>
<circle cx="382.0" cy="611.2" r="6.200"/>
<circle cx="395.4" cy="612.3" r="6.200"/>
<circle cx="53.3" cy="626.2" r="6.200"/>
<circle cx="66.0" cy="625.1" r="6.200"/>
<circle cx="78.9" cy="625.9" r="6.200"/>
<circle cx="93.9" cy="625.3" r="6.200"/>
<circle cx="107.8" cy="625.5" r="6.200"/>
<circle cx="122.2" cy="626.1" r="6.200"/>
<circle cx="134.5" cy="626.5" r="6.200"/>
<circle cx="147.8" cy="625.7" r="6.200"/>
<circle cx="162.4" cy="625.0" r="6.200"/>
<circle cx="175.3" cy="626.2" r="6.200"/>
<circle cx="189.0" cy="625.7" r="6.200"/>
<circle cx="204.8" cy="624.8" r="6.200"/>
<circle cx="217.0" cy="625.8" r="6.200"/>
<circle cx="231.4" cy="625.9" r="6.200"/>
<circle cx="245.8" cy="624.9" r="6.200"/>
<circle cx="258.5" cy="625.2" r="6.200"/>
<circle cx="271.7" cy="626.5" r="6.200"/>
<circle cx="287.1" cy="626.1" r="6.200"/>
<circle cx="299.1" cy="626.4" r="6.200"/>
<circle cx="314.5" cy="625.5" r="6.200"/>
<circle cx="328.3" cy="625.5" r="6.200"/>
<circle cx="340.9" cy="624.7" r="6.200"/>
<circle cx="354.7" cy="624.6" r="6.200"/>
<circle cx="368.7" cy="626.1" r="6.200"/>
<circle cx="383.2" cy="626.4" r="6.200"/>
<circle cx="397.0" cy="625.1" r="6.200"/>
<circle cx="52.6" cy="639.1" r="6.200"/>
<circle cx="66.8" cy="639.3" r="6.200"/>
<circle cx="79.5" cy="639.5" r="6.200"/>
<circle cx="94.8" cy="638.6" r="6.200"/>
<circle cx="108.4" cy="638.1" r="6.200"/>
<circle cx="120.8" cy="638.6" r="6.200"/>
<circle cx="135.6" cy="640.2" r="6.200"/>
<circle cx="149.4" cy="638.8" r="6.200"/>
<circle cx="163.5" cy="638.8" r="6.200"/>
<circle cx="175.8" cy="640.1" r="6.200"/>
<circle cx="190.5" cy="639.6" r="6.200"/>
<circle cx="204.3" cy="640.3" r="6.200"/>
<circle cx="217.7" cy="639.9" r="6.200"/>
<circle cx="231.9" cy="640.0" r="6.200"/>
<circle cx="245.1" cy="639.7" r="6.200"/>
<circle cx="259.2" cy="638.8" r="6.200"/>
<circle cx="272.2" cy="639.5" r="6.200"/>
<circle cx="285.7" cy="640.1" r="6.200"/>
<circle cx="299.6" cy="638.2" r="6.200"/>
<circle cx="313.3" cy="640.1" r="6.200"/>
<circle cx="327.6" cy="638.4" r="6.200"/>
<circle cx="340.6" cy="638.2" r="6.200"/>
<circle cx="355.9" cy="639.5" r="6.200"/>
<circle cx="369.7" cy="639.7" r="6.200"/>
<circle cx="382.1" cy="639.4" r="6.200"/>
<circle cx="396.5" cy="639.9" r="6.200"/>
<circle cx="53.1" cy="653.7" r="6.200"/>
<circle cx="65.3" cy="653.6" r="6.200"/>
<circle cx="80.9" cy="653.8" r="6.200"/>
<circle cx="92.9" cy="652.2" r="6.200"/>
<circle cx="106.7" cy="651.8" r="6.200"/>
<circle cx="122.1" cy="653.5" r="6.200"/>
<circle cx="135.4" cy="653.5" r="6.200"/>
<circle cx="149.2" cy="652.3" r="6.200"/>
<circle cx="161.8" cy="651.9" r="6.200"/>
<circle cx="177.0" cy="652.2" r="6.200"/>
<circle cx="189.9" cy="652.6" r="6.200"/>
<circle cx="203.0" cy="652.3" r="6.200"/>
<circle cx="217.4" cy="653.3" r="6.200"/>
<circle cx="231.3" cy="652.4" r="6.200"/>
<circle cx="246.4" cy="652.8" r="6.200"/>
<circle cx="260.0" cy="653.1" r="6.200"/>
<circle cx="271.9" cy="652.6" r="6.200"/>
<circle cx="286.6" cy="653.4" r="6.200"/>
<circle cx="300.2" cy="653.3" r="6.200"/>
<circle cx="314.4" cy="652.2" r="6.200"/>
<circle cx="328.9" cy="651.9" r="6.200"/>
<circle cx="342.6" cy="652.1" r="6.200"/>
<circle cx="354.6" cy="652.1" r="6.200"/>
<circle cx="370.0" cy="653.9" r="6.200"/>
<circle cx="382.1" cy="652.8" r="6.200"/>
<circle cx="397.0" cy="653.5" r="6.200"/>
<circle cx="93.3" cy="665.8" r="6.200"/>
<circle cx="108.0" cy="666.4" r="6.200"/>
<circle cx="120.5" cy="666.7" r="6.200"/>
<circle cx="134.3" cy="667.0" r="6.200"/>
<circle cx="149.4" cy="667.0" r="6.200"/>
<circle cx="163.0" cy="666.1" r="6.200"/>
<circle cx="176.3" cy="666.2" r="6.200"/>
<circle cx="191.2" cy="665.5" r="6.200"/>
<circle cx="205.0" cy="665.4" r="6.200"/>
<circle cx="217.3" cy="665.9" r="6.200"/>
<circle cx="232.6" cy="666.4" r="6.200"/>
<circle cx="245.3" cy="667.2" r="6.200"/>
<circle cx="258.7" cy="666.3" r="6.200"/>
<circle cx="273.2" cy="667.0" r="6.200"/>
<circle cx="287.5" cy="666.7" r="6.200"/>
<circle cx="300.4" cy="666.0" r="6.200"/>
<circle cx="313.7" cy="667.2" r="6.200"/>
<circle cx="328.6" cy="666.9" r="6.200"/>
<circle cx="341.4" cy="666.3" r="6.200"/>
<circle cx="356.5" cy="666.6" r="6.200"/>
<circle cx="368.8" cy="666.3" r="6.200"/>
<circle cx="384.3" cy="665.8" r="6.200"/>
<circle cx="396.6" cy="666.0" r="6.200"/>
<circle cx="52.8" cy="680.8" r="6.200"/>
<circle cx="65.4" cy="679.2" r="6.200"/>
<circle cx="79.5" cy="679.6" r="6.200"/>
<circle cx="93.9" cy="679.3" r="6.200"/>
<circle cx="107.2" cy="679.3" r="6.200"/>
<circle cx="122.5" cy="680.5" r="6.200"/>
<circle cx="134.3" cy="681.0" r="6.200"/>
<circle cx="148.2" cy="679.7" r="6.200"/>
<circle cx="163.9" cy="680.6" r="6.200"/>
<circle cx="177.1" cy="679.9" r="6.200"/>
<circle cx="189.8" cy="680.3" r="6.200"/>
<circle cx="203.4" cy="679.4" r="6.200"/>
<circle cx="217.8" cy="679.0" r="6.200"/>
<circle cx="231.6" cy="680.6" r="6.200"/>
<circle cx="246.1" cy="680.0" r="6.200"/>
<circle cx="259.8" cy="679.9" r="6.200"/>
<circle cx="272.5" cy="680.2" r="6.200"/>
<circle cx="286.9" cy="680.5" r="6.200"/>
<circle cx="301.8" cy="679.8" r="6.200"/>
<circle cx="314.8" cy="680.5" r="6.200"/>
<circle cx="328.3" cy="679.4" r="6.200"/>
<circle cx="342.8" cy="680.8" r="6.200"/>
<circle cx="356.7" cy="680.4" r="6.200"/>
<circle cx="370.7" cy="680.4" r="6.200"/>
<circle cx="384.0" cy="679.9" r="6.200"/>
</g>
<g fill="#00f000"><circle cx="398.2" cy="677.2" r="5.300"/><path d="M414.2 677.2L406.2 673.2L406.2 681.2Z"/><path d="M397.5 669.2h1.400v16h-1.400zM390.2 676.5h16v1.400h-16z"/></g>
<rect x="17.500" y="324.500" width="417" height="374" fill="none" stroke="#3c7cd8" stroke-width="1"/>
</svg>
<!-- ===== RIGHT PANEL ===== -->
<div class="a" style="left:655px;top:82px;width:369px;height:94px;background:#2e4068"></div>
<div class="t w" style="left:665px;top:95px">T200</div>
<div class="a" style="left:700px;top:92px;width:314px;height:18px;background:#fff;border:1px solid #1e4878"></div>
<div class="t k" style="left:703px;top:96px">轮廓的个数</div>
<!-- tool icon -->
<div class="a" style="left:664px;top:117px;width:20px;height:20px;background:linear-gradient(#dedede,#b4b4b4);border:1px solid #c8c8c8"></div>
<svg width="20" height="20" style="left:664px;top:117px" viewBox="0 0 20 20">
  <rect x="6.300" y="2.600" width="2.600" height="5.400" rx="1.300" fill="none" stroke="#5cd86c" stroke-width=".9"/>
  <path d="M9.900 2.600V8M9.900 2.600Q12.600 2.600 12.600 5.300T9.900 8" fill="none" stroke="#5cd86c" stroke-width=".9"/>
  <circle cx="5.600" cy="10.400" r="2.500" fill="#1e4a22"/><circle cx="14.500" cy="10" r="2.500" fill="#1e4a22"/>
  <circle cx="5.600" cy="10.400" r=".9" fill="#3c9a3c"/><circle cx="14.500" cy="10" r=".9" fill="#3c9a3c"/>
  <circle cx="10.700" cy="14.500" r="2.100" fill="#2a9ce0"/><circle cx="10.700" cy="14.500" r="2.900" fill="none" stroke="#58c868" stroke-width=".7"/>
</svg>
<div class="t w" style="left:693px;top:122px">轮廓的个数</div>
<div class="t w" style="left:885px;top:149px">基准图像</div>
<div class="a" style="left:941px;top:144px;width:73px;height:21px;background:#e6e6e6;border:1px solid #f8f8f8"></div>
<div class="t c" style="left:941px;top:149px;width:73px;color:#1a1a1a;font-size:13px">2 - 000</div>
<!-- green line -->
<div class="a" style="left:655px;top:176px;width:369px;height:4px;background:#00f400"></div>
<div class="a" style="left:655px;top:180px;width:369px;height:1px;background:#0a1a0a"></div>
<!-- body -->
<div class="a" style="left:655px;top:181px;width:369px;height:494px;background:#f0f0f0;border-left:1px solid #8c94b4;overflow:hidden"></div>
<!-- box 1: icon row (scrolled, clipped by header) -->
<div class="a" style="left:655px;top:181px;width:353px;height:494px;overflow:hidden">
 <div class="a" style="left:-655px;top:-181px;width:1024px;height:768px">
  <div class="a box" style="top:140px;height:101px"></div>
  <div class="a ibtn" style="left:683px"></div>
  <div class="a ibtn" style="left:763px"></div>
  <div class="a ibtn" style="left:844px"></div>
  <div class="a ibtn" style="left:924px"></div>
  <!-- icon 1: search range -->
  <svg width="40" height="14" style="left:691px;top:181px" viewBox="0 0 40 14"><path d="M5 0V8M37 0V8" stroke="#222" stroke-width="2"/><path d="M5 7.800H37" stroke="#111" stroke-width="1.800"/><path d="M17 .5H30.500" stroke="#2a7ae0" stroke-width="1"/><circle cx="5" cy="8" r="2.500" fill="#4a4a4a"/><circle cx="37" cy="8" r="2.500" fill="#4a4a4a"/></svg>
  <!-- icon 2: search object -->
  <svg width="36" height="12" style="left:775px;top:181px" viewBox="0 0 36 12"><path d="M.5 0V7.500H34.500V0" fill="none" stroke="#2a7ae0" stroke-width="1"/><path d="M12 2.200H30" stroke="#333" stroke-width="2"/><circle cx="12.500" cy="2.500" r="2.200" fill="#444"/><circle cx="29.500" cy="2.500" r="2.200" fill="#444"/></svg>
  <!-- icon 3: colour extract -->
  <svg width="40" height="12" style="left:852px;top:181px" viewBox="0 0 40 12"><defs><linearGradient id="rb" x1="0" x2="1" y1="0" y2="0"><stop offset="0" stop-color="#e02090"/><stop offset=".2" stop-color="#7030e0"/><stop offset=".4" stop-color="#20a0f0"/><stop offset=".6" stop-color="#20d060"/><stop offset=".8" stop-color="#90e020"/><stop offset="1" stop-color="#d8e820"/></linearGradient></defs><rect x="1" y="4" width="38" height="6" fill="url(#rb)"/><path d="M16 0H24L20 2.500Z" fill="#555"/></svg>
  <!-- icon 4: preprocess -->
  <svg width="36" height="12" style="left:936px;top:181px" viewBox="0 0 36 12"><path d="M9.500 0V7.500Q9.500 9.500 11.500 9.500H31Q33 9.500 33 7.500V0" fill="#fff" stroke="#2a2e36" stroke-width="2"/><path d="M24 0L31 8.500H19Z" fill="#c4c4c4"/><path d="M2.500 0H18V2.500L11.500 7L9.500 4.500H4.500Z" fill="#2a7ad8"/></svg>
  <div class="t k" style="left:687px;top:211px">搜索范围</div>
  <div class="t k" style="left:767px;top:211px">搜索对象</div>
  <div class="t k" style="left:848px;top:211px">颜色抽取</div>
  <div class="t k" style="left:934px;top:211px">预处理</div>

  <!-- box 2: detect conditions -->
  <div class="a box" style="top:250px;height:110px"></div>
  <div class="a" style="left:666px;top:289px;width:332px;height:1px;background:#8a8a8a"></div>
  <div class="t k" style="left:674px;top:265px">检测条件</div>
  <div class="a more" style="top:259px"></div>
  <div class="t k" style="left:674px;top:310px">角度范围</div>
  <div class="t k" style="left:875px;top:310px;font-size:14px;letter-spacing:.3px">+/-</div>
  <div class="a inp" style="top:305px">030</div>
  <div class="t k" style="left:674px;top:336px">检测个数</div>
  <div class="a inp" style="top:331px">0800</div>

  <!-- box 3 -->
  <div class="a box" style="top:369px;height:40px"></div>
  <div class="t k" style="left:674px;top:384px">轮廓抽取条件</div>
  <div class="a more" style="top:378px"></div>

  <!-- box 4 -->
  <div class="a box" style="top:418px;height:280px"></div>
  <div class="a" style="left:666px;top:457px;width:332px;height:1px;background:#8a8a8a"></div>
  <div class="t k" style="left:674px;top:433px">判定条件</div>
  <div class="a more" style="top:427px"></div>
  <div class="t k" style="left:674px;top:472px">相似度</div>
  <div class="t k" style="left:690px;top:501px">上限</div>
  <div class="a inp" style="top:496px">--.---</div>
  <div class="t k" style="left:690px;top:527px">检测值</div>
  <div class="t k r" style="left:900px;width:90px;top:527px;font-size:12.5px">94.533</div>
  <div class="t k" style="left:690px;top:553px">下限</div>
  <div class="a inp" style="top:548px">--.---</div>
  <div class="t k" style="left:674px;top:582px">个数</div>
  <div class="t k" style="left:690px;top:611px">上限</div>
  <div class="a inp" style="top:606px">----</div>
  <div class="t k" style="left:690px;top:637px">检测值</div>
  <div class="t k r" style="left:900px;width:90px;top:637px;font-size:12.5px">673</div>
  <div class="t k" style="left:690px;top:662px">下限</div>
  <div class="a inp" style="top:658px">----</div>
 </div>
</div>
<!-- >> chevrons -->
<svg width="12" height="9" style="left:969.500px;top:266px" viewBox="0 0 12 9"><path d="M.5 0H2.800L5.800 4.500L2.800 9H.5L3.200 4.500ZM6.200 0H8.500L11.500 4.500L8.500 9H6.200L8.900 4.500Z" fill="#5a6670"/></svg>
<svg width="12" height="9" style="left:969.500px;top:385px" viewBox="0 0 12 9"><path d="M.5 0H2.800L5.800 4.500L2.800 9H.5L3.200 4.500ZM6.200 0H8.500L11.500 4.500L8.500 9H6.200L8.900 4.500Z" fill="#5a6670"/></svg>
<svg width="12" height="9" style="left:969.500px;top:434px" viewBox="0 0 12 9"><path d="M.5 0H2.800L5.800 4.500L2.800 9H.5L3.200 4.500ZM6.200 0H8.500L11.500 4.500L8.500 9H6.200L8.900 4.500Z" fill="#5a6670"/></svg>
<!-- scrollbar -->
<div class="a" style="left:1008px;top:181px;width:16px;height:494px;background:#d4d4d4;border-left:1px solid #8c8c8c;border-right:2px solid #8a8c94"></div>
<div class="a" style="left:1008px;top:182px;width:15px;height:15px;background:#d2d2d2;border:1px solid #111"></div>
<svg width="9" height="6" style="left:1011px;top:186.500px"><path d="M0 4.500H8.500L4.250 0Z" fill="#6c6c6c"/></svg>
<div class="a" style="left:1008px;top:660px;width:15px;height:15px;background:#d2d2d2;border:1px solid #111"></div>
<svg width="9" height="6" style="left:1011px;top:665.500px"><path d="M0 0H8.500L4.250 4.500Z" fill="#6c6c6c"/></svg>
<div class="a" style="left:1008px;top:247px;width:15px;height:395px;background:linear-gradient(90deg,#d0d0d0 0,#c0c0c0 3px,#bcbcbc 100%);border:1px solid #000"></div>
<!-- footer -->
<div class="a" style="left:655px;top:675px;width:369px;height:46px;background:#d8d8e2;border-top:1px solid #9a9aa6;border-left:1px solid #8c94b4"></div>
<div class="a" style="left:684px;top:678px;width:30px;height:27px;border-radius:4px;border:1px solid #000;background:linear-gradient(#56585c,#2c2e32)"></div>
<svg width="12" height="12" style="left:694px;top:686px" viewBox="0 0 12 12"><rect x="0" y="0" width="2" height="8" fill="#f4f4f4"/><rect x="3" y="0" width="7" height="8" fill="#f4f4f4"/><path d="M6.500 1L8.500 4L6.500 7L4.500 4Z" fill="#2e3034"/><rect x="0" y="9" width="10" height="2" fill="#f4f4f4"/></svg>
<div class="t k" style="left:664px;top:707px">原点/检测点</div>
<div class="a fbtn" style="left:849px">确定</div>
<div class="a fbtn" style="left:935px">取消</div>
<!-- bottom bar -->
<div class="a" style="left:655px;top:721px;width:369px;height:47px;background:#1c1c1c"></div>
<div class="a bbtn" style="left:664px;width:48px"></div>
<svg width="28" height="13" style="left:674.500px;top:738px" viewBox="0 0 28 13" fill="none" stroke="#ececec" stroke-width="2.400"><rect x="1.200" y="1.200" width="25.600" height="10.600" rx="2"/><path d="M9.700 1V12M18.300 1V12"/></svg>
<div class="a bbtn" style="left:718px;width:140px"></div>
<svg width="24" height="22" style="left:727px;top:734px" viewBox="0 0 24 22" fill="none" stroke="#d8d8d8" stroke-width="1.500"><rect x="1.500" y="5" width="13" height="8.500" rx="1" transform="rotate(14 8 9)"/><rect x="7.500" y="9.500" width="14.500" height="10.500" rx="1" fill="#3c3e44"/><path d="M10 18L13 14.500L15 16.500L17 15L19.500 18Z" fill="#d8d8d8" stroke="none"/><path d="M14 4.500Q17 2 20.500 3.500" stroke-width="1.600"/><path d="M18.500 .5L22.500 3.200L19.500 6.500Z" fill="#d8d8d8" stroke="none"/></svg>
<div class="t w" style="left:764px;top:739px">基准图像注册</div>
<div class="a bbtn" style="left:885px;width:88px;background:linear-gradient(#4a6cb0,#1c3470);border-top-color:#6a86c8;border-left-color:#5674b8"></div>
<svg width="18" height="18" style="left:891px;top:736px" viewBox="0 0 18 18"><circle cx="9" cy="9" r="8" fill="#fff"/><path d="M6.800 4.800V13.200L13.500 9Z" fill="#24407e"/></svg>
<div class="t w" style="left:912px;top:739px">执行检测</div>
<div class="a bbtn" style="left:975px;width:40px;background:linear-gradient(#4a6cb0,#1c3470);border-top-color:#6a86c8;border-left-color:#5674b8"></div>
<svg width="22" height="22" style="left:985px;top:733px" viewBox="0 0 22 22" fill="none" stroke="#fff" stroke-width="1.400"><path d="M3 8A8.500 8.500 0 0 1 19 8"/><path d="M2.500 3V8.500H8"/><path d="M19 14A8.500 8.500 0 0 1 3 14"/><path d="M19.500 19V13.500H14"/><path d="M9 8V14L14 11Z" fill="#fff" stroke="none"/></svg>
</body>
</html>
